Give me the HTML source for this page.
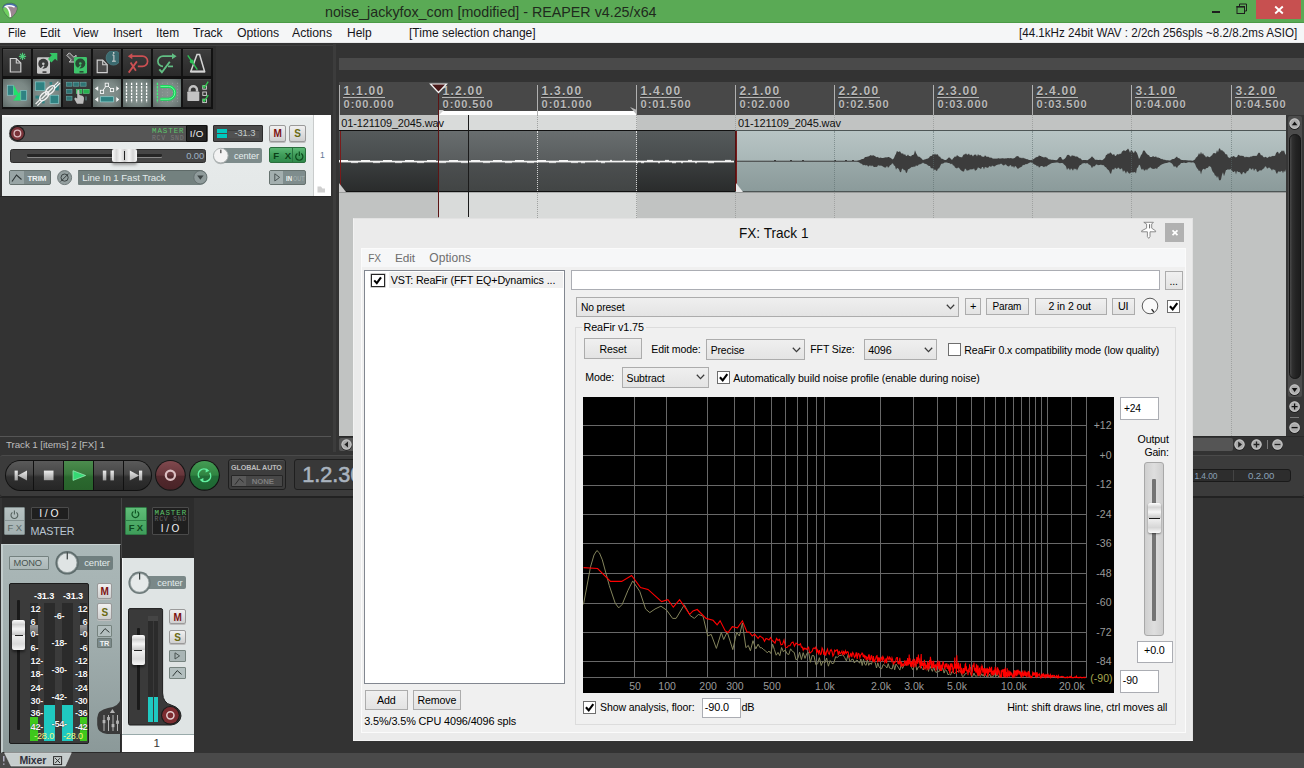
<!DOCTYPE html>
<html><head><meta charset="utf-8"><title>REAPER</title>
<style>
html,body{margin:0;padding:0;}
body{width:1304px;height:768px;overflow:hidden;background:#333333;position:relative;font-family:"Liberation Sans",sans-serif;}
div,span,svg{position:absolute;box-sizing:border-box;}
.t{line-height:0;white-space:nowrap;}
.t i{display:inline-block;height:40px;width:0;}
.t b{font-weight:normal;line-height:0;}
</style></head><body>
<div style="left:0px;top:0px;width:1304px;height:23px;background:#5AAA55;border-bottom:1px solid #4b9a46;"></div>
<div class="t" style="left:324.5px;top:-23.00px;color:#1f2a1d;"><i></i><b style="font-size:15px;display:inline-block;transform:scaleX(0.951279);transform-origin:0 50%;">noise_jackyfox_com [modified] - REAPER v4.25/x64</b></div>
<svg style="left:1px;top:1px;" width="20" height="20" viewBox="0 0 20 20"><defs><clipPath id="ic"><path d="M1.6 6.6Q2.4 3.4 6 2.4Q10.5 1.4 14 3.2Q16.6 4.8 16.4 8Q15.6 12 12 15.4Q10 17.6 8.6 17.2Q6.4 16 4 12.6Q1.4 9 1.6 6.6Z"/></clipPath></defs><g clip-path="url(#ic)"><rect width="20" height="20" fill="#9b8691"/><path d="M0 0H20V7.4L13 5.4L5 5.6L0 9Z" fill="#4c6fae"/><path d="M0 8L4 6L8 10L9.4 18L0 18Z" fill="#70cf60"/><path d="M3.6 5.8Q8 3.6 13.6 6" fill="none" stroke="#fff" stroke-width="1.4"/><path d="M5.4 5.6Q9.4 9 9.3 16" fill="none" stroke="#fff" stroke-width="1.6"/></g><path d="M1.6 6.6Q2.4 3.4 6 2.4Q10.5 1.4 14 3.2Q16.6 4.8 16.4 8Q15.6 12 12 15.4Q10 17.6 8.6 17.2Q6.4 16 4 12.6Q1.4 9 1.6 6.6Z" fill="none" stroke="#3f7a45" stroke-width="0.7"/></svg>
<div style="left:1212px;top:11px;width:8px;height:2px;background:#1e1e1e;"></div>
<svg style="left:1236px;top:3px;" width="12" height="12" viewBox="0 0 12 12"><path d="M3.5 3.5V1H10.5V8H8.5" fill="none" stroke="#1e1e1e" stroke-width="1"/><rect x="1" y="3.5" width="7.5" height="7" fill="none" stroke="#1e1e1e" stroke-width="1"/><rect x="0.5" y="3" width="8.5" height="1.6" fill="#1e1e1e"/></svg>
<div style="left:1256px;top:0px;width:45px;height:19px;background:#C75050;"></div>
<svg style="left:1274px;top:5px;" width="10" height="10" viewBox="0 0 10 10"><path d="M1.2 1.5L8.8 8.5M8.8 1.5L1.2 8.5" stroke="#fff" stroke-width="1.9"/></svg>
<div style="left:0px;top:23px;width:1304px;height:20px;background:#F5F6F7;"></div>
<div style="left:0px;top:42px;width:1304px;height:1px;background:#E8E9EA;"></div>
<div class="t" style="left:7.6px;top:-3.00px;color:#15151a;"><i></i><b style="font-size:12px;display:inline-block;transform:scaleX(0.930954);transform-origin:0 50%;">File</b></div>
<div class="t" style="left:39.6px;top:-3.00px;color:#15151a;"><i></i><b style="font-size:12px;display:inline-block;transform:scaleX(0.976907);transform-origin:0 50%;">Edit</b></div>
<div class="t" style="left:73.2px;top:-3.00px;color:#15151a;"><i></i><b style="font-size:12px;display:inline-block;transform:scaleX(0.984782);transform-origin:0 50%;">View</b></div>
<div class="t" style="left:112.5px;top:-3.00px;color:#15151a;"><i></i><b style="font-size:12px;display:inline-block;transform:scaleX(0.969697);transform-origin:0 50%;">Insert</b></div>
<div class="t" style="left:156px;top:-3.00px;color:#15151a;"><i></i><b style="font-size:12px;display:inline-block;transform:scaleX(0.989876);transform-origin:0 50%;">Item</b></div>
<div class="t" style="left:193.2px;top:-3.00px;color:#15151a;"><i></i><b style="font-size:12px;display:inline-block;transform:scaleX(1.00156);transform-origin:0 50%;">Track</b></div>
<div class="t" style="left:236.5px;top:-3.00px;color:#15151a;"><i></i><b style="font-size:12px;display:inline-block;transform:scaleX(1.02048);transform-origin:0 50%;">Options</b></div>
<div class="t" style="left:292.3px;top:-3.00px;color:#15151a;"><i></i><b style="font-size:12px;display:inline-block;transform:scaleX(1.0165);transform-origin:0 50%;">Actions</b></div>
<div class="t" style="left:346.6px;top:-3.00px;color:#15151a;"><i></i><b style="font-size:12px;display:inline-block;transform:scaleX(1.00086);transform-origin:0 50%;">Help</b></div>
<div class="t" style="left:409.4px;top:-3.00px;color:#15151a;"><i></i><b style="font-size:12px;display:inline-block;transform:scaleX(1.00254);transform-origin:0 50%;">[Time selection change]</b></div>
<div class="t" style="left:1019.1px;top:-3.00px;color:#15151a;"><i></i><b style="font-size:12px;display:inline-block;transform:scaleX(0.966987);transform-origin:0 50%;">[44.1kHz 24bit WAV : 2/2ch 256spls ~8.2/8.2ms ASIO]</b></div>
<div style="left:0px;top:43px;width:1304px;height:725px;background:#333333;"></div>
<div style="left:0px;top:45px;width:333px;height:1px;background:#404040;"></div>
<div style="left:333.2px;top:44px;width:2.6px;height:408px;background:#3c3c3c;"></div>
<div style="left:339px;top:58px;width:965px;height:12px;background:#4a4a4a;"></div>
<div style="left:339px;top:82px;width:965px;height:33px;background:#484848;"></div>
<div style="left:339px;top:115px;width:947px;height:321px;background:#C1C3C2;"></div>
<div style="left:439px;top:115px;width:198px;height:321px;background:#D9DBDA;"></div>
<div style="left:439px;top:110.5px;width:198px;height:4.5px;background:#ffffff;"></div>
<svg style="left:430px;top:104px;" width="20" height="11" viewBox="0 0 20 11"><path d="M9 11V6L14 6Z" fill="#cfcfcf"/></svg>
<svg style="left:624px;top:104px;" width="14" height="11" viewBox="0 0 14 11"><path d="M13 11V6L6 3Z" fill="#b8b8b8"/></svg>
<div style="left:339px;top:85px;width:1px;height:30px;background:#b0b0b0;"></div>
<div class="t" style="left:343.6px;top:55.00px;color:#b9b9b9;"><i></i><b style="font-size:12px;font-weight:bold;letter-spacing:1.248px;text-shadow:0 1px 0 #2a2a2a;">1.1.00</b></div>
<div style="left:343px;top:97px;width:41.5px;height:1px;background:#b4b4b4;"></div>
<div class="t" style="left:343.6px;top:67.80px;color:#b9b9b9;"><i></i><b style="font-size:11px;font-weight:bold;letter-spacing:0.940px;text-shadow:0 1px 0 #2a2a2a;">0:00.000</b></div>
<div style="left:438px;top:85px;width:1px;height:30px;background:#b0b0b0;"></div>
<div class="t" style="left:442.6px;top:55.00px;color:#b9b9b9;"><i></i><b style="font-size:12px;font-weight:bold;letter-spacing:1.248px;text-shadow:0 1px 0 #2a2a2a;">1.2.00</b></div>
<div style="left:442px;top:97px;width:41.5px;height:1px;background:#b4b4b4;"></div>
<div class="t" style="left:442.6px;top:67.80px;color:#b9b9b9;"><i></i><b style="font-size:11px;font-weight:bold;letter-spacing:0.940px;text-shadow:0 1px 0 #2a2a2a;">0:00.500</b></div>
<div style="left:438px;top:115px;width:0px;height:321px;border-left:1px dotted #a0a2a1;"></div>
<div style="left:537px;top:85px;width:1px;height:30px;background:#b0b0b0;"></div>
<div class="t" style="left:541.6px;top:55.00px;color:#b9b9b9;"><i></i><b style="font-size:12px;font-weight:bold;letter-spacing:1.248px;text-shadow:0 1px 0 #2a2a2a;">1.3.00</b></div>
<div style="left:541px;top:97px;width:41.5px;height:1px;background:#b4b4b4;"></div>
<div class="t" style="left:541.6px;top:67.80px;color:#b9b9b9;"><i></i><b style="font-size:11px;font-weight:bold;letter-spacing:0.940px;text-shadow:0 1px 0 #2a2a2a;">0:01.000</b></div>
<div style="left:537px;top:115px;width:0px;height:321px;border-left:1px dotted #a0a2a1;"></div>
<div style="left:636px;top:85px;width:1px;height:30px;background:#b0b0b0;"></div>
<div class="t" style="left:640.6px;top:55.00px;color:#b9b9b9;"><i></i><b style="font-size:12px;font-weight:bold;letter-spacing:1.248px;text-shadow:0 1px 0 #2a2a2a;">1.4.00</b></div>
<div style="left:640px;top:97px;width:41.5px;height:1px;background:#b4b4b4;"></div>
<div class="t" style="left:640.6px;top:67.80px;color:#b9b9b9;"><i></i><b style="font-size:11px;font-weight:bold;letter-spacing:0.940px;text-shadow:0 1px 0 #2a2a2a;">0:01.500</b></div>
<div style="left:636px;top:115px;width:0px;height:321px;border-left:1px dotted #a0a2a1;"></div>
<div style="left:735px;top:85px;width:1px;height:30px;background:#b0b0b0;"></div>
<div class="t" style="left:739.6px;top:55.00px;color:#b9b9b9;"><i></i><b style="font-size:12px;font-weight:bold;letter-spacing:1.248px;text-shadow:0 1px 0 #2a2a2a;">2.1.00</b></div>
<div style="left:739px;top:97px;width:41.5px;height:1px;background:#b4b4b4;"></div>
<div class="t" style="left:739.6px;top:67.80px;color:#b9b9b9;"><i></i><b style="font-size:11px;font-weight:bold;letter-spacing:0.940px;text-shadow:0 1px 0 #2a2a2a;">0:02.000</b></div>
<div style="left:735px;top:115px;width:0px;height:321px;border-left:1px dotted #a0a2a1;"></div>
<div style="left:834px;top:85px;width:1px;height:30px;background:#b0b0b0;"></div>
<div class="t" style="left:838.6px;top:55.00px;color:#b9b9b9;"><i></i><b style="font-size:12px;font-weight:bold;letter-spacing:1.248px;text-shadow:0 1px 0 #2a2a2a;">2.2.00</b></div>
<div style="left:838px;top:97px;width:41.5px;height:1px;background:#b4b4b4;"></div>
<div class="t" style="left:838.6px;top:67.80px;color:#b9b9b9;"><i></i><b style="font-size:11px;font-weight:bold;letter-spacing:0.940px;text-shadow:0 1px 0 #2a2a2a;">0:02.500</b></div>
<div style="left:834px;top:115px;width:0px;height:321px;border-left:1px dotted #a0a2a1;"></div>
<div style="left:933px;top:85px;width:1px;height:30px;background:#b0b0b0;"></div>
<div class="t" style="left:937.6px;top:55.00px;color:#b9b9b9;"><i></i><b style="font-size:12px;font-weight:bold;letter-spacing:1.248px;text-shadow:0 1px 0 #2a2a2a;">2.3.00</b></div>
<div style="left:937px;top:97px;width:41.5px;height:1px;background:#b4b4b4;"></div>
<div class="t" style="left:937.6px;top:67.80px;color:#b9b9b9;"><i></i><b style="font-size:11px;font-weight:bold;letter-spacing:0.940px;text-shadow:0 1px 0 #2a2a2a;">0:03.000</b></div>
<div style="left:933px;top:115px;width:0px;height:321px;border-left:1px dotted #a0a2a1;"></div>
<div style="left:1032px;top:85px;width:1px;height:30px;background:#b0b0b0;"></div>
<div class="t" style="left:1036.6px;top:55.00px;color:#b9b9b9;"><i></i><b style="font-size:12px;font-weight:bold;letter-spacing:1.248px;text-shadow:0 1px 0 #2a2a2a;">2.4.00</b></div>
<div style="left:1036px;top:97px;width:41.5px;height:1px;background:#b4b4b4;"></div>
<div class="t" style="left:1036.6px;top:67.80px;color:#b9b9b9;"><i></i><b style="font-size:11px;font-weight:bold;letter-spacing:0.940px;text-shadow:0 1px 0 #2a2a2a;">0:03.500</b></div>
<div style="left:1032px;top:115px;width:0px;height:321px;border-left:1px dotted #a0a2a1;"></div>
<div style="left:1131px;top:85px;width:1px;height:30px;background:#b0b0b0;"></div>
<div class="t" style="left:1135.6px;top:55.00px;color:#b9b9b9;"><i></i><b style="font-size:12px;font-weight:bold;letter-spacing:1.248px;text-shadow:0 1px 0 #2a2a2a;">3.1.00</b></div>
<div style="left:1135px;top:97px;width:41.5px;height:1px;background:#b4b4b4;"></div>
<div class="t" style="left:1135.6px;top:67.80px;color:#b9b9b9;"><i></i><b style="font-size:11px;font-weight:bold;letter-spacing:0.940px;text-shadow:0 1px 0 #2a2a2a;">0:04.000</b></div>
<div style="left:1131px;top:115px;width:0px;height:321px;border-left:1px dotted #a0a2a1;"></div>
<div style="left:1231px;top:85px;width:1px;height:30px;background:#b0b0b0;"></div>
<div class="t" style="left:1235.6px;top:55.00px;color:#b9b9b9;"><i></i><b style="font-size:12px;font-weight:bold;letter-spacing:1.248px;text-shadow:0 1px 0 #2a2a2a;">3.2.00</b></div>
<div style="left:1235px;top:97px;width:41.5px;height:1px;background:#b4b4b4;"></div>
<div class="t" style="left:1235.6px;top:67.80px;color:#b9b9b9;"><i></i><b style="font-size:11px;font-weight:bold;letter-spacing:0.940px;text-shadow:0 1px 0 #2a2a2a;">0:04.500</b></div>
<div style="left:1231px;top:115px;width:0px;height:321px;border-left:1px dotted #a0a2a1;"></div>
<div class="t" style="left:341.2px;top:86.60px;color:#101010;"><i></i><b style="font-size:11.01px;letter-spacing:-0.122px;">01-121109_2045.wav</b></div>
<div class="t" style="left:738px;top:86.60px;color:#101010;"><i></i><b style="font-size:11.01px;letter-spacing:-0.122px;">01-121109_2045.wav</b></div>
<div style="left:339px;top:130px;width:396px;height:62px;background:linear-gradient(#555a5b 0%,#484c4d 47%,#3a3d3e 53%,#2a2c2c 100%);border-top:1px solid #111;border-bottom:1px solid #111;"></div>
<div style="left:439px;top:131px;width:198px;height:60px;background:linear-gradient(#696e6f 0%,#5a5e5f 47%,#4c4f50 53%,#424545 100%);"></div>
<svg style="left:339px;top:131px;" width="396" height="60" viewBox="0 0 396 60"><rect x="0" y="29.7" width="395" height="1.7" fill="#f4f4f4"/><rect x="0" y="29" width="9" height="1" fill="#f4f4f4"/><rect x="12" y="31.2" width="7" height="0.9" fill="#e8e8e8"/><rect x="22" y="29" width="9" height="1" fill="#f4f4f4"/><rect x="34" y="31.2" width="7" height="0.9" fill="#e8e8e8"/><rect x="44" y="29" width="9" height="1" fill="#f4f4f4"/><rect x="56" y="31.2" width="7" height="0.9" fill="#e8e8e8"/><rect x="66" y="29" width="9" height="1" fill="#f4f4f4"/><rect x="78" y="31.2" width="7" height="0.9" fill="#e8e8e8"/><rect x="88" y="29" width="9" height="1" fill="#f4f4f4"/><rect x="100" y="31.2" width="7" height="0.9" fill="#e8e8e8"/><rect x="110" y="29" width="9" height="1" fill="#f4f4f4"/><rect x="122" y="31.2" width="7" height="0.9" fill="#e8e8e8"/><rect x="132" y="29" width="9" height="1" fill="#f4f4f4"/><rect x="144" y="31.2" width="7" height="0.9" fill="#e8e8e8"/><rect x="154" y="29" width="9" height="1" fill="#f4f4f4"/><rect x="166" y="31.2" width="7" height="0.9" fill="#e8e8e8"/><rect x="176" y="29" width="9" height="1" fill="#f4f4f4"/><rect x="188" y="31.2" width="7" height="0.9" fill="#e8e8e8"/><rect x="198" y="29" width="9" height="1" fill="#f4f4f4"/><rect x="210" y="31.2" width="7" height="0.9" fill="#e8e8e8"/><rect x="220" y="29" width="9" height="1" fill="#f4f4f4"/><rect x="232" y="31.2" width="7" height="0.9" fill="#e8e8e8"/><rect x="242" y="31.2" width="4" height="1" fill="#f0f0f0"/><rect x="257" y="28.9" width="2" height="1" fill="#f4f4f4"/><rect x="262" y="31.2" width="4" height="1" fill="#f0f0f0"/><rect x="271" y="28.9" width="2" height="1" fill="#f4f4f4"/><rect x="284" y="28.9" width="2" height="1" fill="#f4f4f4"/><rect x="297" y="31.2" width="2" height="1" fill="#f0f0f0"/><rect x="302" y="31.2" width="3" height="1" fill="#f0f0f0"/><rect x="308" y="28.9" width="6" height="1" fill="#f4f4f4"/><rect x="319" y="31.2" width="2" height="1" fill="#f0f0f0"/><rect x="326" y="28.9" width="4" height="1" fill="#f4f4f4"/><rect x="333" y="31.2" width="4" height="1" fill="#f0f0f0"/><rect x="342" y="31.2" width="2" height="1" fill="#f0f0f0"/><rect x="349" y="28.9" width="4" height="1" fill="#f4f4f4"/><rect x="356" y="31.2" width="2" height="1" fill="#f0f0f0"/><rect x="369" y="31.2" width="6" height="1" fill="#f0f0f0"/><rect x="386" y="28.9" width="6" height="1" fill="#f4f4f4"/></svg>
<div style="left:339.5px;top:131px;width:1px;height:60px;background:#7a1a1a;"></div>
<svg style="left:339px;top:183px;" width="10" height="9" viewBox="0 0 10 9"><path d="M0 0L7 9H0Z" fill="#c9c9c9"/></svg>
<div style="left:735px;top:130px;width:551px;height:62px;background:linear-gradient(#b7c4c4 0%,#a9b7b7 48%,#99a8a8 52%,#8b9b9b 100%);border-top:1px solid #4d5555;border-bottom:1px solid #4d5555;"></div>
<div style="left:734.8px;top:131px;width:2px;height:60px;background:linear-gradient(90deg,#3a1010,#8e1c1c);"></div>
<svg style="left:736px;top:183px;" width="10" height="9" viewBox="0 0 10 9"><path d="M0 0L7 9H0Z" fill="#e8e8e8"/></svg>
<svg style="left:737px;top:131px;" width="549" height="60" viewBox="0 0 549 60"><path d="M0.0 29.8 L1.0 29.8 L2.0 29.8 L3.0 29.8 L4.0 29.8 L5.0 29.8 L6.0 29.8 L7.0 29.8 L8.0 29.8 L9.0 29.8 L10.0 29.8 L11.0 29.8 L12.0 29.8 L13.0 29.8 L14.0 29.8 L15.0 29.8 L16.0 29.8 L17.0 29.8 L18.0 29.8 L19.0 29.8 L20.0 29.8 L21.0 29.8 L22.0 29.8 L23.0 29.8 L24.0 29.8 L25.0 29.8 L26.0 29.8 L27.0 29.8 L28.0 29.8 L29.0 29.8 L30.0 29.8 L31.0 29.8 L32.0 29.8 L33.0 29.8 L34.0 29.8 L35.0 29.8 L36.0 29.8 L37.0 29.8 L38.0 29.8 L39.0 29.8 L40.0 29.8 L41.0 29.8 L42.0 29.8 L43.0 29.8 L44.0 29.8 L45.0 29.8 L46.0 29.8 L47.0 29.8 L48.0 29.8 L49.0 29.8 L50.0 29.8 L51.0 29.8 L52.0 29.8 L53.0 29.8 L54.0 29.8 L55.0 29.8 L56.0 29.8 L57.0 29.8 L58.0 29.8 L59.0 29.8 L60.0 29.8 L61.0 29.8 L62.0 29.8 L63.0 29.8 L64.0 29.8 L65.0 29.8 L66.0 29.8 L67.0 29.8 L68.0 29.8 L69.0 29.8 L70.0 29.8 L71.0 29.8 L72.0 29.8 L73.0 29.8 L74.0 29.8 L75.0 29.8 L76.0 29.8 L77.0 29.8 L78.0 29.8 L79.0 29.8 L80.0 29.8 L81.0 29.8 L82.0 29.8 L83.0 29.8 L84.0 29.8 L85.0 29.8 L86.0 29.8 L87.0 29.8 L88.0 29.8 L89.0 29.8 L90.0 29.8 L91.0 29.8 L92.0 29.8 L93.0 29.8 L94.0 29.8 L95.0 29.8 L96.0 29.8 L97.0 29.8 L98.0 29.8 L99.0 29.8 L100.0 29.8 L101.0 29.8 L102.0 29.8 L103.0 29.8 L104.0 29.8 L105.0 29.8 L106.0 29.8 L107.0 29.8 L108.0 29.8 L109.0 29.8 L110.0 29.8 L111.0 29.8 L112.0 29.8 L113.0 29.8 L114.0 29.8 L115.0 29.8 L116.0 29.8 L117.0 29.8 L118.0 29.8 L119.0 29.8 L120.0 29.8 L121.0 29.6 L122.0 29.3 L123.0 29.1 L124.0 28.6 L125.0 27.9 L126.0 28.1 L127.0 27.5 L128.0 26.1 L129.0 25.9 L130.0 25.8 L131.0 25.5 L132.0 25.3 L133.0 24.6 L134.0 24.0 L135.0 25.0 L136.0 24.0 L137.0 24.7 L138.0 25.0 L139.0 26.0 L140.0 26.2 L141.0 25.8 L142.0 27.3 L143.0 26.4 L144.0 26.8 L145.0 27.0 L146.0 27.1 L147.0 26.8 L148.0 26.5 L149.0 26.2 L150.0 26.5 L151.0 26.1 L152.0 26.0 L153.0 26.8 L154.0 27.1 L155.0 28.2 L156.0 28.2 L157.0 27.0 L158.0 24.4 L159.0 22.7 L160.0 19.7 L161.0 20.9 L162.0 20.7 L163.0 20.3 L164.0 21.9 L165.0 22.8 L166.0 22.2 L167.0 23.9 L168.0 23.1 L169.0 25.1 L170.0 24.7 L171.0 23.5 L172.0 25.0 L173.0 24.9 L174.0 25.4 L175.0 23.9 L176.0 23.9 L177.0 23.3 L178.0 19.2 L179.0 22.1 L180.0 23.7 L181.0 25.7 L182.0 25.4 L183.0 26.3 L184.0 27.1 L185.0 27.9 L186.0 29.2 L187.0 28.5 L188.0 28.5 L189.0 27.9 L190.0 27.8 L191.0 27.4 L192.0 26.8 L193.0 25.2 L194.0 24.9 L195.0 24.8 L196.0 22.8 L197.0 23.9 L198.0 22.6 L199.0 24.1 L200.0 22.9 L201.0 23.8 L202.0 25.8 L203.0 25.6 L204.0 27.5 L205.0 27.7 L206.0 27.9 L207.0 28.8 L208.0 28.9 L209.0 29.0 L210.0 28.2 L211.0 27.2 L212.0 26.2 L213.0 26.9 L214.0 27.9 L215.0 29.1 L216.0 27.6 L217.0 26.4 L218.0 25.3 L219.0 25.9 L220.0 24.1 L221.0 25.0 L222.0 25.6 L223.0 26.3 L224.0 26.0 L225.0 26.6 L226.0 24.6 L227.0 23.3 L228.0 23.4 L229.0 22.2 L230.0 23.8 L231.0 23.4 L232.0 22.5 L233.0 24.5 L234.0 23.4 L235.0 23.9 L236.0 25.5 L237.0 23.8 L238.0 23.7 L239.0 23.5 L240.0 25.5 L241.0 23.0 L242.0 24.5 L243.0 24.0 L244.0 24.4 L245.0 25.8 L246.0 25.6 L247.0 25.9 L248.0 24.3 L249.0 25.3 L250.0 25.9 L251.0 25.5 L252.0 26.3 L253.0 26.7 L254.0 26.6 L255.0 27.1 L256.0 27.7 L257.0 27.4 L258.0 27.7 L259.0 27.4 L260.0 27.7 L261.0 27.3 L262.0 27.3 L263.0 27.8 L264.0 27.3 L265.0 27.6 L266.0 27.1 L267.0 27.7 L268.0 27.2 L269.0 27.6 L270.0 27.2 L271.0 27.1 L272.0 27.3 L273.0 27.2 L274.0 27.0 L275.0 27.4 L276.0 27.4 L277.0 27.2 L278.0 26.8 L279.0 25.4 L280.0 25.2 L281.0 25.1 L282.0 25.9 L283.0 27.1 L284.0 26.6 L285.0 27.4 L286.0 26.5 L287.0 27.6 L288.0 27.3 L289.0 28.3 L290.0 28.1 L291.0 28.6 L292.0 28.9 L293.0 29.1 L294.0 29.3 L295.0 28.8 L296.0 28.3 L297.0 28.0 L298.0 26.7 L299.0 26.5 L300.0 25.7 L301.0 26.1 L302.0 24.2 L303.0 25.0 L304.0 24.9 L305.0 26.1 L306.0 25.7 L307.0 26.7 L308.0 25.7 L309.0 26.4 L310.0 26.6 L311.0 27.8 L312.0 28.4 L313.0 28.3 L314.0 28.7 L315.0 28.8 L316.0 28.7 L317.0 29.1 L318.0 29.1 L319.0 29.2 L320.0 28.9 L321.0 27.9 L322.0 26.5 L323.0 25.9 L324.0 26.1 L325.0 28.2 L326.0 28.8 L327.0 28.2 L328.0 27.5 L329.0 26.2 L330.0 24.3 L331.0 23.8 L332.0 23.9 L333.0 25.0 L334.0 25.8 L335.0 24.0 L336.0 25.1 L337.0 24.5 L338.0 25.5 L339.0 25.4 L340.0 25.4 L341.0 26.1 L342.0 27.2 L343.0 27.2 L344.0 27.8 L345.0 29.2 L346.0 29.1 L347.0 28.9 L348.0 29.1 L349.0 29.1 L350.0 29.2 L351.0 29.1 L352.0 27.9 L353.0 27.4 L354.0 26.6 L355.0 25.3 L356.0 26.5 L357.0 27.3 L358.0 28.7 L359.0 28.8 L360.0 28.7 L361.0 29.0 L362.0 28.9 L363.0 28.8 L364.0 29.0 L365.0 29.2 L366.0 28.8 L367.0 27.8 L368.0 26.9 L369.0 24.1 L370.0 23.7 L371.0 22.2 L372.0 23.0 L373.0 21.6 L374.0 21.7 L375.0 23.3 L376.0 24.0 L377.0 22.7 L378.0 25.1 L379.0 24.8 L380.0 23.2 L381.0 23.3 L382.0 23.4 L383.0 22.4 L384.0 23.1 L385.0 20.6 L386.0 20.0 L387.0 19.0 L388.0 20.2 L389.0 19.4 L390.0 18.8 L391.0 17.5 L392.0 18.9 L393.0 21.8 L394.0 18.9 L395.0 19.6 L396.0 21.3 L397.0 22.1 L398.0 19.5 L399.0 20.8 L400.0 22.0 L401.0 24.7 L402.0 28.1 L403.0 26.4 L404.0 24.1 L405.0 23.1 L406.0 20.0 L407.0 19.3 L408.0 20.2 L409.0 22.1 L410.0 23.0 L411.0 23.9 L412.0 24.3 L413.0 25.9 L414.0 26.1 L415.0 26.0 L416.0 25.0 L417.0 25.7 L418.0 26.0 L419.0 25.3 L420.0 26.7 L421.0 26.2 L422.0 27.1 L423.0 27.1 L424.0 28.2 L425.0 27.7 L426.0 28.4 L427.0 28.8 L428.0 28.8 L429.0 29.2 L430.0 29.3 L431.0 29.2 L432.0 29.4 L433.0 29.6 L434.0 29.1 L435.0 28.3 L436.0 28.0 L437.0 27.9 L438.0 27.2 L439.0 26.2 L440.0 25.6 L441.0 27.2 L442.0 27.1 L443.0 27.9 L444.0 28.7 L445.0 29.1 L446.0 28.9 L447.0 29.2 L448.0 29.1 L449.0 29.2 L450.0 29.3 L451.0 29.4 L452.0 29.4 L453.0 29.5 L454.0 29.6 L455.0 29.7 L456.0 29.8 L457.0 29.1 L458.0 28.4 L459.0 26.5 L460.0 26.1 L461.0 24.4 L462.0 22.0 L463.0 23.8 L464.0 20.7 L465.0 23.6 L466.0 22.0 L467.0 24.3 L468.0 24.6 L469.0 26.4 L470.0 25.2 L471.0 25.6 L472.0 26.0 L473.0 26.2 L474.0 24.7 L475.0 24.6 L476.0 22.4 L477.0 22.1 L478.0 22.3 L479.0 22.5 L480.0 18.9 L481.0 21.5 L482.0 17.6 L483.0 17.6 L484.0 19.8 L485.0 18.7 L486.0 20.5 L487.0 20.5 L488.0 22.4 L489.0 23.6 L490.0 23.3 L491.0 26.2 L492.0 26.4 L493.0 27.3 L494.0 25.4 L495.0 26.0 L496.0 25.3 L497.0 25.1 L498.0 26.2 L499.0 26.2 L500.0 26.0 L501.0 23.9 L502.0 23.8 L503.0 25.0 L504.0 24.4 L505.0 25.0 L506.0 24.7 L507.0 25.4 L508.0 26.5 L509.0 25.5 L510.0 26.3 L511.0 25.8 L512.0 26.5 L513.0 25.7 L514.0 25.6 L515.0 25.5 L516.0 24.8 L517.0 25.0 L518.0 24.7 L519.0 25.1 L520.0 24.6 L521.0 22.6 L522.0 21.4 L523.0 22.3 L524.0 24.5 L525.0 24.0 L526.0 25.6 L527.0 26.4 L528.0 25.9 L529.0 25.7 L530.0 27.0 L531.0 26.5 L532.0 25.8 L533.0 25.4 L534.0 25.9 L535.0 24.8 L536.0 25.3 L537.0 24.7 L538.0 24.9 L539.0 22.3 L540.0 21.0 L541.0 20.7 L542.0 23.0 L543.0 21.5 L544.0 20.8 L545.0 19.2 L546.0 20.5 L547.0 19.3 L548.0 22.4 L549.0 23.9 L549.0 38.2 L548.0 41.3 L547.0 39.4 L546.0 42.2 L545.0 39.7 L544.0 40.2 L543.0 41.1 L542.0 40.3 L541.0 40.7 L540.0 43.1 L539.0 41.4 L538.0 38.6 L537.0 39.3 L536.0 37.7 L535.0 39.8 L534.0 37.9 L533.0 37.3 L532.0 36.2 L531.0 37.3 L530.0 37.4 L529.0 35.6 L528.0 35.5 L527.0 37.5 L526.0 37.7 L525.0 38.9 L524.0 39.7 L523.0 39.0 L522.0 39.9 L521.0 40.7 L520.0 40.7 L519.0 37.8 L518.0 38.3 L517.0 40.1 L516.0 37.1 L515.0 38.4 L514.0 38.4 L513.0 36.8 L512.0 38.2 L511.0 40.3 L510.0 40.1 L509.0 41.9 L508.0 42.7 L507.0 41.3 L506.0 41.1 L505.0 43.5 L504.0 43.1 L503.0 41.3 L502.0 40.9 L501.0 41.1 L500.0 39.8 L499.0 43.4 L498.0 39.8 L497.0 41.0 L496.0 40.9 L495.0 39.6 L494.0 38.4 L493.0 38.0 L492.0 38.9 L491.0 38.0 L490.0 39.1 L489.0 39.1 L488.0 42.3 L487.0 45.3 L486.0 41.3 L485.0 43.8 L484.0 48.5 L483.0 49.5 L482.0 48.9 L481.0 44.9 L480.0 46.9 L479.0 44.4 L478.0 44.8 L477.0 42.0 L476.0 41.2 L475.0 39.3 L474.0 36.1 L473.0 35.5 L472.0 35.1 L471.0 36.8 L470.0 37.0 L469.0 37.3 L468.0 38.8 L467.0 37.8 L466.0 37.9 L465.0 39.5 L464.0 43.5 L463.0 39.2 L462.0 40.3 L461.0 38.3 L460.0 37.3 L459.0 35.5 L458.0 32.7 L457.0 31.7 L456.0 31.3 L455.0 31.4 L454.0 31.5 L453.0 31.3 L452.0 31.3 L451.0 31.3 L450.0 31.8 L449.0 32.1 L448.0 32.0 L447.0 31.6 L446.0 32.1 L445.0 31.9 L444.0 32.0 L443.0 33.4 L442.0 34.3 L441.0 35.0 L440.0 36.9 L439.0 35.9 L438.0 35.0 L437.0 36.0 L436.0 33.9 L435.0 32.6 L434.0 32.1 L433.0 31.3 L432.0 31.2 L431.0 31.5 L430.0 32.0 L429.0 32.0 L428.0 32.3 L427.0 32.5 L426.0 32.9 L425.0 33.3 L424.0 34.0 L423.0 34.5 L422.0 35.8 L421.0 35.9 L420.0 38.0 L419.0 37.2 L418.0 37.5 L417.0 38.1 L416.0 37.8 L415.0 37.7 L414.0 36.7 L413.0 36.2 L412.0 37.6 L411.0 37.5 L410.0 39.5 L409.0 37.9 L408.0 39.6 L407.0 39.6 L406.0 37.6 L405.0 38.9 L404.0 37.6 L403.0 34.3 L402.0 33.8 L401.0 36.5 L400.0 37.0 L399.0 42.5 L398.0 41.1 L397.0 41.3 L396.0 41.5 L395.0 41.2 L394.0 41.3 L393.0 42.6 L392.0 42.4 L391.0 41.3 L390.0 40.0 L389.0 42.7 L388.0 40.5 L387.0 39.3 L386.0 40.9 L385.0 37.2 L384.0 37.7 L383.0 38.5 L382.0 36.9 L381.0 36.4 L380.0 38.0 L379.0 37.6 L378.0 36.4 L377.0 39.1 L376.0 37.8 L375.0 39.3 L374.0 43.0 L373.0 41.9 L372.0 39.6 L371.0 38.8 L370.0 37.8 L369.0 36.2 L368.0 35.9 L367.0 34.5 L366.0 34.0 L365.0 34.3 L364.0 33.5 L363.0 33.9 L362.0 34.1 L361.0 34.3 L360.0 33.4 L359.0 33.4 L358.0 35.1 L357.0 35.5 L356.0 35.2 L355.0 37.2 L354.0 35.3 L353.0 33.8 L352.0 33.7 L351.0 32.6 L350.0 32.0 L349.0 32.4 L348.0 32.3 L347.0 32.0 L346.0 32.4 L345.0 32.5 L344.0 34.0 L343.0 34.0 L342.0 35.5 L341.0 37.5 L340.0 39.5 L339.0 37.4 L338.0 38.6 L337.0 37.3 L336.0 39.7 L335.0 38.3 L334.0 37.3 L333.0 39.4 L332.0 37.6 L331.0 37.2 L330.0 38.9 L329.0 35.6 L328.0 34.2 L327.0 33.6 L326.0 32.3 L325.0 31.9 L324.0 32.1 L323.0 32.3 L322.0 32.1 L321.0 31.6 L320.0 31.4 L319.0 31.4 L318.0 31.7 L317.0 31.7 L316.0 31.9 L315.0 31.9 L314.0 32.5 L313.0 32.9 L312.0 33.8 L311.0 33.9 L310.0 35.2 L309.0 35.4 L308.0 35.3 L307.0 36.3 L306.0 35.4 L305.0 35.1 L304.0 35.1 L303.0 35.7 L302.0 36.8 L301.0 34.4 L300.0 35.4 L299.0 34.1 L298.0 33.8 L297.0 33.2 L296.0 32.6 L295.0 32.1 L294.0 31.3 L293.0 31.4 L292.0 32.0 L291.0 32.4 L290.0 33.2 L289.0 33.0 L288.0 33.4 L287.0 34.3 L286.0 33.8 L285.0 35.5 L284.0 35.9 L283.0 36.5 L282.0 37.0 L281.0 37.9 L280.0 37.0 L279.0 35.4 L278.0 34.9 L277.0 36.9 L276.0 34.8 L275.0 36.2 L274.0 34.2 L273.0 34.3 L272.0 35.4 L271.0 35.2 L270.0 34.8 L269.0 33.6 L268.0 33.6 L267.0 34.4 L266.0 34.2 L265.0 33.3 L264.0 32.6 L263.0 33.2 L262.0 33.4 L261.0 33.6 L260.0 34.0 L259.0 34.2 L258.0 35.2 L257.0 35.5 L256.0 34.9 L255.0 34.5 L254.0 36.3 L253.0 35.1 L252.0 35.5 L251.0 36.9 L250.0 36.4 L249.0 36.4 L248.0 35.8 L247.0 38.5 L246.0 36.1 L245.0 36.0 L244.0 38.3 L243.0 37.3 L242.0 36.9 L241.0 36.3 L240.0 38.4 L239.0 39.2 L238.0 39.7 L237.0 37.2 L236.0 38.6 L235.0 38.1 L234.0 38.7 L233.0 38.0 L232.0 39.5 L231.0 38.9 L230.0 40.0 L229.0 38.2 L228.0 37.4 L227.0 40.6 L226.0 40.4 L225.0 40.0 L224.0 39.3 L223.0 38.2 L222.0 36.7 L221.0 36.6 L220.0 37.4 L219.0 37.0 L218.0 36.5 L217.0 34.6 L216.0 34.5 L215.0 32.5 L214.0 33.2 L213.0 32.4 L212.0 32.0 L211.0 32.1 L210.0 31.4 L209.0 31.4 L208.0 31.6 L207.0 31.8 L206.0 32.7 L205.0 32.5 L204.0 33.3 L203.0 35.4 L202.0 37.6 L201.0 37.6 L200.0 40.1 L199.0 39.4 L198.0 38.2 L197.0 39.2 L196.0 37.7 L195.0 36.9 L194.0 37.6 L193.0 34.9 L192.0 35.0 L191.0 34.6 L190.0 33.4 L189.0 33.0 L188.0 32.7 L187.0 32.6 L186.0 31.4 L185.0 32.5 L184.0 32.7 L183.0 33.4 L182.0 33.3 L181.0 34.6 L180.0 35.1 L179.0 34.3 L178.0 35.9 L177.0 35.3 L176.0 36.3 L175.0 35.8 L174.0 36.5 L173.0 37.3 L172.0 37.9 L171.0 38.3 L170.0 41.4 L169.0 42.0 L168.0 38.7 L167.0 39.6 L166.0 37.8 L165.0 37.8 L164.0 41.3 L163.0 41.1 L162.0 38.4 L161.0 37.2 L160.0 37.0 L159.0 38.7 L158.0 35.1 L157.0 34.5 L156.0 32.5 L155.0 32.5 L154.0 34.1 L153.0 34.3 L152.0 36.0 L151.0 36.8 L150.0 34.8 L149.0 36.6 L148.0 36.4 L147.0 36.2 L146.0 35.4 L145.0 34.9 L144.0 34.6 L143.0 34.8 L142.0 34.4 L141.0 34.2 L140.0 35.9 L139.0 35.7 L138.0 36.0 L137.0 36.0 L136.0 35.2 L135.0 34.2 L134.0 35.4 L133.0 34.1 L132.0 35.3 L131.0 35.4 L130.0 33.9 L129.0 34.4 L128.0 34.2 L127.0 33.7 L126.0 34.5 L125.0 32.7 L124.0 32.7 L123.0 31.9 L122.0 31.3 L121.0 31.1 L120.0 30.8 L119.0 30.8 L118.0 30.8 L117.0 30.8 L116.0 30.8 L115.0 30.8 L114.0 30.8 L113.0 30.8 L112.0 30.8 L111.0 30.8 L110.0 30.8 L109.0 30.8 L108.0 30.8 L107.0 30.8 L106.0 30.8 L105.0 30.8 L104.0 30.8 L103.0 30.8 L102.0 30.8 L101.0 30.8 L100.0 30.8 L99.0 30.8 L98.0 30.8 L97.0 30.8 L96.0 30.8 L95.0 30.8 L94.0 30.8 L93.0 30.8 L92.0 30.8 L91.0 30.8 L90.0 30.8 L89.0 30.8 L88.0 30.8 L87.0 30.8 L86.0 30.8 L85.0 30.8 L84.0 30.8 L83.0 30.8 L82.0 30.8 L81.0 30.8 L80.0 30.8 L79.0 30.8 L78.0 30.8 L77.0 30.8 L76.0 30.8 L75.0 30.8 L74.0 30.8 L73.0 30.8 L72.0 30.8 L71.0 30.8 L70.0 30.8 L69.0 30.8 L68.0 30.8 L67.0 30.8 L66.0 30.8 L65.0 30.8 L64.0 30.8 L63.0 30.8 L62.0 30.8 L61.0 30.8 L60.0 30.8 L59.0 30.8 L58.0 30.8 L57.0 30.8 L56.0 30.8 L55.0 30.8 L54.0 30.8 L53.0 30.8 L52.0 30.8 L51.0 30.8 L50.0 30.8 L49.0 30.8 L48.0 30.8 L47.0 30.8 L46.0 30.8 L45.0 30.8 L44.0 30.8 L43.0 30.8 L42.0 30.8 L41.0 30.8 L40.0 30.8 L39.0 30.8 L38.0 30.8 L37.0 30.8 L36.0 30.8 L35.0 30.8 L34.0 30.8 L33.0 30.8 L32.0 30.8 L31.0 30.8 L30.0 30.8 L29.0 30.8 L28.0 30.8 L27.0 30.8 L26.0 30.8 L25.0 30.8 L24.0 30.8 L23.0 30.8 L22.0 30.8 L21.0 30.8 L20.0 30.8 L19.0 30.8 L18.0 30.8 L17.0 30.8 L16.0 30.8 L15.0 30.8 L14.0 30.8 L13.0 30.8 L12.0 30.8 L11.0 30.8 L10.0 30.8 L9.0 30.8 L8.0 30.8 L7.0 30.8 L6.0 30.8 L5.0 30.8 L4.0 30.8 L3.0 30.8 L2.0 30.8 L1.0 30.8 L0.0 30.8Z" fill="#3c3c3c"/></svg>
<div style="left:773.5px;top:160px;width:2px;height:1px;background:#3c3c3c;"></div>
<div style="left:790px;top:160px;width:2px;height:1px;background:#3c3c3c;"></div>
<div style="left:802px;top:160px;width:2px;height:1px;background:#3c3c3c;"></div>
<div style="left:834px;top:160px;width:2px;height:1px;background:#3c3c3c;"></div>
<div style="left:845px;top:160px;width:2px;height:1px;background:#3c3c3c;"></div>
<div style="left:852px;top:160px;width:2px;height:1px;background:#3c3c3c;"></div>
<div style="left:438px;top:131px;width:0px;height:60px;border-left:1px dotted rgba(255,255,255,0.75);"></div>
<div style="left:537px;top:131px;width:0px;height:60px;border-left:1px dotted rgba(255,255,255,0.75);"></div>
<div style="left:636px;top:131px;width:0px;height:60px;border-left:1px dotted rgba(255,255,255,0.75);"></div>
<div style="left:834px;top:131px;width:0px;height:60px;border-left:1px dotted rgba(90,105,105,0.55);"></div>
<div style="left:933px;top:131px;width:0px;height:60px;border-left:1px dotted rgba(90,105,105,0.55);"></div>
<div style="left:1032px;top:131px;width:0px;height:60px;border-left:1px dotted rgba(90,105,105,0.55);"></div>
<div style="left:1131px;top:131px;width:0px;height:60px;border-left:1px dotted rgba(90,105,105,0.55);"></div>
<div style="left:1231px;top:131px;width:0px;height:60px;border-left:1px dotted rgba(90,105,105,0.55);"></div>
<div style="left:339px;top:192px;width:947px;height:1px;background:rgba(0,0,0,0.2);"></div>
<div style="left:438px;top:93px;width:1px;height:124px;background:#5c1414;"></div>
<svg style="left:429px;top:83px;" width="20" height="11" viewBox="0 0 20 11"><path d="M1.5 1H17.5L9.5 9.5Z" fill="#4a1a1a" stroke="#f4f4f4" stroke-width="1.2"/></svg>
<div style="left:467.5px;top:115px;width:1.5px;height:102px;background:#1b1b1b;"></div>
<div style="left:0px;top:46px;width:216px;height:64px;background:#2e2e2e;"></div>
<div style="left:2px;top:48px;width:211px;height:61px;background:#121212;"></div>
<div style="left:3px;top:49px;width:28px;height:27.4px;background:linear-gradient(#3d3d3d 0%,#333 50%,#2a2a2a 100%);border-top:1px solid #4a4a4a;"></div>
<svg style="left:3px;top:49px;" width="28" height="28" viewBox="0 0 28 28"><path d="M7.3 9.5H13.3L17.8 14V23H7.3Z" fill="#4b4b4b" stroke="#cfcfcf" stroke-width="1.2"/><path d="M13.3 9.5V14H17.8" fill="none" stroke="#cfcfcf" stroke-width="1.1"/><line x1="23.1" y1="7.4" x2="15.9" y2="7.4" stroke="#4fcf7c" stroke-width="1.1"/><line x1="22.0456" y1="9.94558" x2="16.9544" y2="4.85442" stroke="#4fcf7c" stroke-width="1.1"/><line x1="19.5" y1="11" x2="19.5" y2="3.8" stroke="#4fcf7c" stroke-width="1.1"/><line x1="16.9544" y1="9.94558" x2="22.0456" y2="4.85442" stroke="#4fcf7c" stroke-width="1.1"/></svg>
<div style="left:33px;top:49px;width:28px;height:27.4px;background:linear-gradient(#3d3d3d 0%,#333 50%,#2a2a2a 100%);border-top:1px solid #4a4a4a;"></div>
<svg style="left:33px;top:49px;" width="28" height="28" viewBox="0 0 28 28"><rect x="4" y="8.3" width="13" height="16.5" rx="1.3" fill="#c9c9c9"/><circle cx="10.3" cy="14.8" r="5" fill="#3a3a3a"/><circle cx="10.3" cy="14.8" r="1.3" fill="#c9c9c9"/><path d="M6.5 21.8L11 16.8" stroke="#c9c9c9" stroke-width="1.4"/><rect x="9.5" y="22.3" width="4" height="1.6" fill="#3a3a3a"/><path d="M24.3 4H16.4L18.7 6.3L15 10L18.4 13.4L22.1 9.7L24.3 11.9Z" fill="#35c565"/></svg>
<div style="left:63px;top:49px;width:28px;height:27.4px;background:linear-gradient(#3d3d3d 0%,#333 50%,#2a2a2a 100%);border-top:1px solid #4a4a4a;"></div>
<svg style="left:63px;top:49px;" width="28" height="28" viewBox="0 0 28 28"><path d="M13 13V6.2L10.9 8.3L6.4 3.8L3.8 6.4L8.3 10.9L6.2 13Z" fill="#585858" stroke="#cfcfcf" stroke-width="1"/><rect x="11" y="8" width="13" height="16.5" rx="1.3" fill="#3fc56c"/><circle cx="17.3" cy="14.5" r="5" fill="#2a4a35"/><circle cx="17.3" cy="14.5" r="1.3" fill="#3fc56c"/><path d="M13.5 21.5L18 16.5" stroke="#3fc56c" stroke-width="1.4"/><rect x="16.5" y="22" width="4" height="1.6" fill="#2a4a35"/></svg>
<div style="left:93px;top:49px;width:28px;height:27.4px;background:linear-gradient(#3d3d3d 0%,#333 50%,#2a2a2a 100%);border-top:1px solid #4a4a4a;"></div>
<svg style="left:93px;top:49px;" width="28" height="28" viewBox="0 0 28 28"><path d="M4.2 11.2H9.7L14.2 15.7V23.7H4.2Z" fill="#4b4b4b" stroke="#cfcfcf" stroke-width="1.2"/><path d="M9.7 11.2V15.7H14.2" fill="none" stroke="#cfcfcf" stroke-width="1.1"/><defs><clipPath id="icl"><rect x="0" y="2" width="26" height="26"/></clipPath></defs><circle cx="20.4" cy="8.8" r="7.3" fill="#3b6a6f" stroke="#4f8388" stroke-width="0.7" clip-path="url(#icl)"/><path d="M19.4 6H20.9V12M19 12.2H22.8" stroke="#dadada" stroke-width="1" fill="none"/><circle cx="20.7" cy="3.9" r="0.85" fill="#dadada"/></svg>
<div style="left:123px;top:49px;width:28px;height:27.4px;background:linear-gradient(#3d3d3d 0%,#333 50%,#2a2a2a 100%);border-top:1px solid #4a4a4a;"></div>
<svg style="left:123px;top:49px;" width="28" height="28" viewBox="0 0 28 28"><path d="M7 7.2H19.5A5.1 5.1 0 0 1 19.5 17.4H14.8" fill="none" stroke="#cc5053" stroke-width="1.7"/><path d="M4.8 7.2L9.3 4.2V10.2Z" fill="#cc5053"/><path d="M7.6 13.6L12.9 21.7M13.9 12.4L5.7 23.6" stroke="#cc5053" stroke-width="1.8" fill="none"/></svg>
<div style="left:153px;top:49px;width:28px;height:27.4px;background:linear-gradient(#3d3d3d 0%,#333 50%,#2a2a2a 100%);border-top:1px solid #4a4a4a;"></div>
<svg style="left:153px;top:49px;" width="28" height="28" viewBox="0 0 28 28"><path d="M21 7.2H10A5.1 5.1 0 0 0 10 17.4" fill="none" stroke="#62bf84" stroke-width="1.7"/><path d="M15 17.4H20" stroke="#62bf84" stroke-width="1.7"/><path d="M23.6 7.2L19 4.2V10.2Z" fill="#62bf84"/><path d="M6.3 20.3L8.9 23.2L16.8 12.8" stroke="#62bf84" stroke-width="1.9" fill="none"/></svg>
<div style="left:183px;top:49px;width:28px;height:27.4px;background:linear-gradient(#3d3d3d 0%,#333 50%,#2a2a2a 100%);border-top:1px solid #4a4a4a;"></div>
<svg style="left:183px;top:49px;" width="28" height="28" viewBox="0 0 28 28"><path d="M14 5.5H16.6L21.6 22.6H7.8Z" fill="none" stroke="#d4d4d4" stroke-width="1.5"/><path d="M7.4 22.6H22" stroke="#d4d4d4" stroke-width="2"/><path d="M4.8 6.4L14.3 20.7" stroke="#2dc257" stroke-width="1.4"/><circle cx="8.8" cy="12.5" r="2" fill="#2dc257"/></svg>
<div style="left:3px;top:79.2px;width:28px;height:27.6px;background:radial-gradient(ellipse at center,#86938f 0%,#7b8885 55%,#5d6866 100%);"></div>
<svg style="left:3px;top:79.2px;" width="28" height="28" viewBox="0 0 28 28"><rect x="4.5" y="6.2" width="5.9" height="10" fill="#2f8282" stroke="#8fd0cf" stroke-width="0.6"/><rect x="17.8" y="11.4" width="5.9" height="9.8" fill="#2f8282" stroke="#8fd0cf" stroke-width="0.6"/><path d="M10.6 6L10.6 16.2H16.6Z" fill="#1fe36a"/><path d="M17.4 12L17.4 21.4H10.2Z" fill="#1fe36a"/></svg>
<div style="left:33px;top:79.2px;width:28px;height:27.6px;background:radial-gradient(ellipse at center,#86938f 0%,#7b8885 55%,#5d6866 100%);"></div>
<svg style="left:33px;top:79.2px;" width="28" height="28" viewBox="0 0 28 28"><rect x="2.4" y="2.9" width="9.5" height="8.6" fill="#2f8282" stroke="#8fd0cf" stroke-width="0.6"/><rect x="17.1" y="16.2" width="8.6" height="8.2" fill="#2f8282" stroke="#8fd0cf" stroke-width="0.6"/><rect x="16.6" y="3" width="2.6" height="2.8" fill="#2f8282"/><rect x="22.2" y="6" width="3.6" height="5.5" fill="#2f8282"/><rect x="2.4" y="16.6" width="4" height="3" fill="#2f8282"/><rect x="9" y="21.4" width="2.6" height="3" fill="#2f8282"/><g stroke="#f2f2f2" fill="none"><path d="M2.6 25L8 19.6M20.6 7.4L25.4 2.6" stroke-width="1.2"/><path d="M4.4 26.6L9.6 21.4M22 9L27 4" stroke-width="1.2"/><path d="M8.5 20L20 8.5" stroke-width="1.2"/><ellipse cx="11.3" cy="17.2" rx="5.6" ry="3" transform="rotate(-45 11.3 17.2)" stroke-width="1.5"/><ellipse cx="17.2" cy="11.2" rx="5.6" ry="3" transform="rotate(-45 17.2 11.2)" stroke-width="1.5"/></g></svg>
<div style="left:63px;top:79.2px;width:28px;height:27.6px;background:linear-gradient(#3d3d3d 0%,#333 50%,#2a2a2a 100%);border-top:1px solid #4a4a4a;"></div>
<svg style="left:63px;top:79.2px;" width="28" height="28" viewBox="0 0 28 28"><rect x="3.5" y="3.2" width="5.5" height="4" fill="#2f7373" stroke="#6aa9a8" stroke-width="0.6"/><rect x="10.5" y="3.2" width="5.5" height="4" fill="#2f7373" stroke="#6aa9a8" stroke-width="0.6"/><rect x="17.6" y="3.2" width="5.5" height="4" fill="#2f7373" stroke="#6aa9a8" stroke-width="0.6"/><rect x="3.5" y="10.3" width="5.5" height="4" fill="#2f7373" stroke="#6aa9a8" stroke-width="0.6"/><rect x="3.5" y="17.2" width="5.5" height="4" fill="#2f7373" stroke="#6aa9a8" stroke-width="0.6"/><rect x="13.3" y="10.3" width="5.7" height="4" fill="#27b04f" stroke="#5fd985" stroke-width="0.6"/><rect x="20.5" y="10.3" width="5.7" height="4" fill="#27b04f" stroke="#5fd985" stroke-width="0.6"/><rect x="22.6" y="17.4" width="0.8" height="4" fill="#6aa9a8"/><path d="M14.2 11.4Q15.3 10.3 16.4 11.4V16L19.4 16.8Q21.4 17.6 21 20L20.2 24.8H14L11.4 20.2Q11.2 18.6 12.6 18.6L14.2 19.6Z" fill="#bdbdbd"/></svg>
<div style="left:93px;top:79.2px;width:28px;height:27.6px;background:radial-gradient(ellipse at center,#86938f 0%,#7b8885 55%,#5d6866 100%);"></div>
<svg style="left:93px;top:79.2px;" width="28" height="28" viewBox="0 0 28 28"><path d="M1.9 9.6L5.2 7.2V12Z M26.2 9.6L23.3 7.2V12Z M1.9 20.5L5.2 18.1V22.9Z M26.2 20.5L23.3 18.1V22.9Z" fill="#f7f7f7"/><path d="M9 12.9L13.8 5.8L19 11" fill="none" stroke="#f7f7f7" stroke-width="1"/><rect x="7.4" y="11.3" width="3.2" height="3.2" fill="#7b8885" stroke="#f7f7f7" stroke-width="0.9"/><rect x="12.2" y="4.2" width="3.2" height="3.2" fill="#7b8885" stroke="#f7f7f7" stroke-width="0.9"/><rect x="17.4" y="9.4" width="3.2" height="3.2" fill="#7b8885" stroke="#f7f7f7" stroke-width="0.9"/><rect x="7.6" y="17.7" width="12.9" height="5.2" fill="#2f8282" stroke="#8fd0cf" stroke-width="0.7"/></svg>
<div style="left:123px;top:79.2px;width:28px;height:27.6px;background:radial-gradient(ellipse at center,#86938f 0%,#7b8885 55%,#5d6866 100%);"></div>
<svg style="left:123px;top:79.2px;" width="28" height="28" viewBox="0 0 28 28"><line x1="3.5" y1="3.8" x2="3.5" y2="23.8" stroke="#fff" stroke-width="1.3" stroke-dasharray="2.3 1"/><line x1="8.6" y1="3.8" x2="8.6" y2="23.8" stroke="#fff" stroke-width="1.3" stroke-dasharray="2.3 1"/><line x1="13.6" y1="3.8" x2="13.6" y2="23.8" stroke="#fff" stroke-width="1.3" stroke-dasharray="2.3 1"/><line x1="18.6" y1="3.8" x2="18.6" y2="23.8" stroke="#fff" stroke-width="1.3" stroke-dasharray="2.3 1"/><line x1="23.6" y1="3.8" x2="23.6" y2="23.8" stroke="#fff" stroke-width="1.3" stroke-dasharray="2.3 1"/></svg>
<div style="left:153px;top:79.2px;width:28px;height:27.6px;background:radial-gradient(ellipse at center,#86938f 0%,#7b8885 55%,#5d6866 100%);"></div>
<svg style="left:153px;top:79.2px;" width="28" height="28" viewBox="0 0 28 28"><line x1="4.4" y1="3.8" x2="4.4" y2="23.8" stroke="#3df57a" stroke-width="1.3" stroke-dasharray="2.3 1"/><line x1="9.4" y1="3.8" x2="9.4" y2="23.8" stroke="#9aa6a3" stroke-width="0.8" stroke-dasharray="1 2"/><line x1="14.5" y1="3.8" x2="14.5" y2="23.8" stroke="#9aa6a3" stroke-width="0.8" stroke-dasharray="1 2"/><line x1="19.5" y1="3.8" x2="19.5" y2="23.8" stroke="#9aa6a3" stroke-width="0.8" stroke-dasharray="1 2"/><line x1="24.5" y1="3.8" x2="24.5" y2="23.8" stroke="#9aa6a3" stroke-width="0.8" stroke-dasharray="1 2"/><path d="M7.4 7.4H15.4A6.4 6.4 0 0 1 15.4 20.2H7.4" fill="none" stroke="#13d957" stroke-width="3"/><path d="M7.4 7.4H15.4A6.4 6.4 0 0 1 15.4 20.2H7.4" fill="none" stroke="#8dffb4" stroke-width="0.8"/></svg>
<div style="left:183px;top:79.2px;width:28px;height:27.6px;background:linear-gradient(#3d3d3d 0%,#333 50%,#2a2a2a 100%);border-top:1px solid #4a4a4a;"></div>
<svg style="left:183px;top:79.2px;" width="28" height="28" viewBox="0 0 28 28"><rect x="4.3" y="12.4" width="12" height="9.6" rx="0.8" fill="#c3c3c3"/><path d="M6.6 12.6V11A3.7 3.7 0 0 1 14 11V12.6" fill="none" stroke="#c3c3c3" stroke-width="2.4"/><rect x="19.8" y="6.8" width="3.6" height="3.4" fill="none" stroke="#d8d8d8" stroke-width="0.9"/><rect x="19.8" y="13" width="3.6" height="3.4" fill="none" stroke="#d8d8d8" stroke-width="0.9"/><rect x="19.8" y="20.2" width="3.6" height="3.4" fill="none" stroke="#d8d8d8" stroke-width="0.9"/><path d="M19.4 6.4L21.2 8.8L25.2 2.6" fill="none" stroke="#2fca50" stroke-width="1.3"/><path d="M19.4 20L21.2 22.4L25.2 16.2" fill="none" stroke="#2fca50" stroke-width="1.3"/></svg>
<div style="left:2px;top:115px;width:311px;height:80.5px;background:linear-gradient(#fdfdfd 0,#e9eded 3px,#e4e8e8 100%);"></div>
<div style="left:313px;top:115px;width:17.5px;height:80.5px;background:#ffffff;border-left:1px solid #c9cccc;"></div>
<div class="t" style="left:320px;top:118.40px;color:#5f7694;"><i></i><b style="font-size:8.5px;">1</b></div>
<svg style="left:317px;top:186px;" width="9" height="7" viewBox="0 0 9 7"><path d="M0.5 0.5H4L5.5 2.5H8V6.5H0.5Z" fill="#d0d0d0"/></svg>
<div style="left:0px;top:195.5px;width:331px;height:1.5px;background:#262626;"></div>
<div style="left:9px;top:125px;width:199px;height:17px;background:#555555;border-radius:8.5px 2px 2px 8.5px;border-top:1.5px solid #222;border-bottom:1px solid #3a3a3a;"></div>
<svg style="left:9px;top:125px;" width="18" height="18" viewBox="0 0 18 18"><circle cx="8.4" cy="8.5" r="7.6" fill="#1d1d1d"/><circle cx="8.4" cy="8.5" r="6.4" fill="#793339"/><circle cx="8.4" cy="8.5" r="3.3" fill="none" stroke="#dcbcc0" stroke-width="1.3"/></svg>
<div class="t" style="left:152px;top:92.90px;color:#5cc46a;"><i></i><b style="font-size:7.5px;letter-spacing:0.920px;font-family:'Liberation Mono',monospace;">MASTER</b></div>
<div class="t" style="left:152px;top:99.60px;color:#7a7a7a;"><i></i><b style="font-size:6.5px;letter-spacing:0.717px;font-family:'Liberation Mono',monospace;">RCV SND</b></div>
<div style="left:185.5px;top:125.3px;width:21.8px;height:16.6px;background:#242424;border:1px solid #111;border-radius:1px;"></div>
<div class="t" style="left:189.8px;top:96.80px;color:#f0f0f0;"><i></i><b style="font-size:9.8px;letter-spacing:0.266px;">I/O</b></div>
<div style="left:213px;top:125.3px;width:50px;height:16.6px;background:#4a4a4a;border:1.5px solid #2c2c2c;border-radius:1px;"></div>
<div style="left:217px;top:129px;width:10.3px;height:3.8px;background:#00c9c0;"></div>
<div style="left:217px;top:134px;width:10.3px;height:3.8px;background:#00c9c0;"></div>
<div style="left:228px;top:129.5px;width:31px;height:8px;background:#515151;border-top:1px solid #3c3c3c;"></div>
<div class="t" style="left:234.5px;top:96.10px;color:#c3cdcd;"><i></i><b style="font-size:9.4px;letter-spacing:-0.106px;">-31.3</b></div>
<div style="left:269.3px;top:125.3px;width:16.3px;height:16.3px;background:linear-gradient(#f0f0f0,#cfcfcf);border:1px solid #9a9a9a;border-radius:2px;box-shadow:0 1px 0 #bdbdbd;"></div>
<div class="t" style="left:273.5px;top:97.00px;color:#7c1212;"><i></i><b style="font-size:10px;font-weight:bold;">M</b></div>
<div style="left:289.3px;top:125.3px;width:16.3px;height:16.3px;background:linear-gradient(#f0f0f0,#cfcfcf);border:1px solid #9a9a9a;border-radius:2px;box-shadow:0 1px 0 #bdbdbd;"></div>
<div class="t" style="left:294.2px;top:97.00px;color:#6a6a12;"><i></i><b style="font-size:10px;font-weight:bold;">S</b></div>
<div style="left:9.8px;top:148.8px;width:196px;height:14px;background:#464646;border-radius:2.5px;border:1px solid #2e2e2e;"></div>
<div style="left:26.7px;top:154.3px;width:135.6px;height:2.6px;background:#262626;border-radius:1px;box-shadow:0 1px 0 #8a8a8a;"></div>
<div style="left:112px;top:148.6px;width:25px;height:13.8px;background:linear-gradient(90deg,#fbfbfb 0%,#d9d9d9 18%,#f4f4f4 32%,#cfcfcf 50%,#f6f6f6 68%,#d6d6d6 84%,#fafafa 100%);border-radius:2px;box-shadow:0 3px 3px rgba(60,60,60,0.45);"></div>
<div style="left:124px;top:151px;width:1.2px;height:9px;background:#222;"></div>
<div class="t" style="left:186.2px;top:118.90px;color:#9fb0c2;"><i></i><b style="font-size:9.43px;letter-spacing:-0.117px;">0.00</b></div>
<div style="left:221px;top:148px;width:41px;height:14.5px;background:#7d8b8b;border-radius:0 2px 2px 0;"></div>
<svg style="left:212px;top:147px;" width="18" height="18" viewBox="0 0 18 18"><circle cx="8.8" cy="9.6" r="7.6" fill="#8d9595" opacity="0.6"/><circle cx="8.8" cy="8.6" r="7.3" fill="#f3f3f3" stroke="#a9afaf" stroke-width="0.9"/><rect x="8.3" y="2.6" width="1.1" height="3.6" fill="#333"/></svg>
<div class="t" style="left:234px;top:118.50px;color:#e6eeee;"><i></i><b style="font-size:9.18px;letter-spacing:-0.102px;">center</b></div>
<div style="left:269px;top:147.3px;width:36.6px;height:16.2px;background:linear-gradient(#5cb875 0%,#3f9c5a 50%,#2f8a4b 100%);border:1px solid #2a6e3d;border-radius:2px;"></div>
<div style="left:292.3px;top:148.3px;width:1px;height:14.2px;background:#2a7540;"></div>
<div class="t" style="left:273.2px;top:118.50px;color:#0b3f17;"><i></i><b style="font-size:9.6px;font-weight:bold;letter-spacing:1.533px;">F X</b></div>
<svg style="left:294px;top:149.5px;" width="11" height="12" viewBox="0 0 11 12"><path d="M3.4 3.6A3.6 3.6 0 1 0 7.2 3.6" fill="none" stroke="#0d4a1d" stroke-width="1.2"/><path d="M5.3 1.6V6" stroke="#0d4a1d" stroke-width="1.2"/></svg>
<div style="left:9.1px;top:170.3px;width:41.8px;height:14.4px;background:#7d8b8b;border:1px solid #66726f;border-radius:2px;"></div>
<div style="left:10px;top:171.2px;width:13.5px;height:12.6px;background:#98a5a5;"></div>
<svg style="left:10px;top:171px;" width="14" height="13" viewBox="0 0 14 13"><path d="M2 10.5L6.5 4L11.5 8.5" fill="none" stroke="#2e3636" stroke-width="1.1"/></svg>
<div class="t" style="left:27.4px;top:140.80px;color:#eef2f2;"><i></i><b style="font-size:7.93px;font-weight:bold;letter-spacing:-0.126px;">TRIM</b></div>
<svg style="left:57px;top:170px;" width="16" height="16" viewBox="0 0 16 16"><circle cx="7.6" cy="7.6" r="7" fill="#94a0a0" stroke="#6d7878" stroke-width="1"/><circle cx="7.6" cy="7.6" r="3.6" fill="none" stroke="#3c4444" stroke-width="1"/><path d="M3.6 11.6L11.6 3.6" stroke="#3c4444" stroke-width="1"/></svg>
<div style="left:78px;top:170.3px;width:129px;height:14.4px;background:#73817f;border-radius:1px 7.2px 7.2px 1px;border-top:1px solid #5e6a68;"></div>
<div class="t" style="left:82.2px;top:140.80px;color:#e3ebeb;"><i></i><b style="font-size:9.71px;letter-spacing:-0.088px;">Line In 1 Fast Track</b></div>
<svg style="left:192.5px;top:170.3px;" width="15" height="15" viewBox="0 0 15 15"><circle cx="7.4" cy="7.3" r="6.6" fill="#8f9b9b" stroke="#5f6b6b" stroke-width="0.8"/><path d="M4.2 5.6H10.6L7.4 9.8Z" fill="#3d4545"/></svg>
<div style="left:269.3px;top:170.1px;width:36.3px;height:14.5px;background:#7f8d8d;border:1px solid #66726f;border-radius:2px;"></div>
<div style="left:270.2px;top:171px;width:13px;height:12.7px;background:#a3afaf;"></div>
<svg style="left:270px;top:171px;" width="14" height="13" viewBox="0 0 14 13"><path d="M4.8 2.8L9.6 6.4L4.8 10Z" fill="none" stroke="#4a5454" stroke-width="1"/></svg>
<div class="t" style="left:285.9px;top:141.00px;color:#f2f6f6;"><i></i><b style="font-size:7.6px;font-weight:bold;display:inline-block;transform:scaleX(0.8);transform-origin:0 50%;">IN</b></div>
<div class="t" style="left:292.6px;top:141.00px;color:#9caaa9;"><i></i><b style="font-size:7.6px;font-weight:bold;display:inline-block;transform:scaleX(0.72);transform-origin:0 50%;">OUT</b></div>
<div style="left:0px;top:436px;width:331px;height:1px;background:#555555;"></div>
<div class="t" style="left:6px;top:407.50px;color:#bdbdbd;"><i></i><b style="font-size:9.81px;letter-spacing:-0.088px;">Track 1 [items] 2 [FX] 1</b></div>
<div style="left:0px;top:455px;width:1304px;height:41.5px;background:#3b3b3b;border-top:1px solid #4a4a4a;border-bottom:1px solid #222;border-radius:3px;"></div>
<div style="left:5px;top:460px;width:147px;height:31px;background:#111;border-radius:15.5px;"></div>
<div style="left:6.3px;top:461.3px;width:26.6px;height:28.4px;background:linear-gradient(#5a5a5a 0%,#474747 45%,#303030 55%,#262626 100%);border-radius:14.2px 0 0 14.2px;"></div>
<div style="left:34.2px;top:461.3px;width:28.4px;height:28.4px;background:linear-gradient(#5a5a5a 0%,#474747 45%,#303030 55%,#262626 100%);border-radius:0;"></div>
<div style="left:63.8px;top:461.3px;width:29.4px;height:28.4px;background:linear-gradient(#4c8c4e 0%,#3a793d 45%,#2b692f 55%,#28622b 100%);border-radius:0;"></div>
<div style="left:94.4px;top:461.3px;width:28.6px;height:28.4px;background:linear-gradient(#5a5a5a 0%,#474747 45%,#303030 55%,#262626 100%);border-radius:0;"></div>
<div style="left:124.2px;top:461.3px;width:26.6px;height:28.4px;background:linear-gradient(#5a5a5a 0%,#474747 45%,#303030 55%,#262626 100%);border-radius:0 14.2px 14.2px 0;"></div>
<svg style="left:5px;top:460px;" width="147" height="31" viewBox="0 0 147 31"><defs><linearGradient id="sv" x1="0" y1="0" x2="0" y2="1"><stop offset="0" stop-color="#ededed"/><stop offset="1" stop-color="#9d9d9d"/></linearGradient></defs><rect x="9.6" y="10.6" width="3.2" height="9.8" fill="url(#sv)"/><path d="M22 10.6V20.4L12.8 15.5Z" fill="url(#sv)"/><rect x="38.9" y="10.6" width="9.6" height="9.6" fill="url(#sv)"/><path d="M68 10.7L80.6 15.5L68 20.4Z" fill="#35d873" stroke="#9df0bd" stroke-width="0.7"/><rect x="97.8" y="10.6" width="3.5" height="9.8" fill="url(#sv)"/><rect x="105.4" y="10.6" width="3.5" height="9.8" fill="url(#sv)"/><path d="M124.8 10.6V20.4L134 15.5Z" fill="url(#sv)"/><rect x="134" y="10.6" width="3.2" height="9.8" fill="url(#sv)"/></svg>
<svg style="left:154px;top:459px;" width="33" height="33" viewBox="0 0 33 33"><defs><linearGradient id="rc" x1="0" y1="0" x2="0" y2="1"><stop offset="0" stop-color="#80494e"/><stop offset="0.5" stop-color="#67363b"/><stop offset="0.52" stop-color="#53292d"/><stop offset="1" stop-color="#492327"/></linearGradient></defs><circle cx="16.4" cy="16.3" r="15.4" fill="#161616"/><circle cx="16.4" cy="16.3" r="14.3" fill="url(#rc)"/><circle cx="16.4" cy="16.3" r="4.6" fill="none" stroke="#dcc0c3" stroke-width="2.2"/></svg>
<svg style="left:188px;top:459px;" width="33" height="33" viewBox="0 0 33 33"><defs><linearGradient id="rp" x1="0" y1="0" x2="0" y2="1"><stop offset="0" stop-color="#459c54"/><stop offset="0.5" stop-color="#308441"/><stop offset="0.52" stop-color="#226f38"/><stop offset="1" stop-color="#1e6632"/></linearGradient></defs><circle cx="16.5" cy="16.3" r="15.4" fill="#121212"/><circle cx="16.5" cy="16.3" r="14.3" fill="url(#rp)"/><path d="M11.3 18.8A5.6 5.6 0 0 1 19.6 11.4" fill="none" stroke="#62f0a0" stroke-width="1.5"/><path d="M21.7 13.8A5.6 5.6 0 0 1 13.4 21.2" fill="none" stroke="#62f0a0" stroke-width="1.5"/><path d="M17.8 9.2L21.4 11.8L17.6 13.6Z" fill="#62f0a0"/><path d="M15.2 23.4L11.6 20.8L15.4 19Z" fill="#62f0a0"/></svg>
<div style="left:227.6px;top:459.3px;width:58px;height:31px;background:#3d3d3d;border:1px solid #1f1f1f;border-radius:3px;box-shadow:inset 0 1px 0 #4d4d4d;"></div>
<div class="t" style="left:231px;top:429.90px;color:#bcbcbc;"><i></i><b style="font-size:7.17px;font-weight:bold;letter-spacing:-0.105px;">GLOBAL AUTO</b></div>
<div style="left:230.5px;top:474.5px;width:52.4px;height:12.3px;background:#474747;border:1px solid #262626;border-radius:1px;"></div>
<div style="left:231.5px;top:475.5px;width:14.8px;height:10.3px;background:#595959;"></div>
<svg style="left:231.5px;top:475.5px;" width="15" height="10" viewBox="0 0 15 10"><path d="M3 8.6L7.6 2.6L11.6 6.2" fill="none" stroke="#2c2c2c" stroke-width="1"/></svg>
<div class="t" style="left:251.8px;top:443.90px;color:#7e7e7e;"><i></i><b style="font-size:7.84px;font-weight:bold;letter-spacing:-0.150px;">NONE</b></div>
<div style="left:294px;top:459.3px;width:700px;height:31px;background:#383838;border:1px solid #1f1f1f;border-radius:3px;"></div>
<div class="t" style="left:302.2px;top:441.60px;color:#a9b3be;"><i></i><b style="font-size:21.7px;-webkit-text-stroke:0.55px #a9b3be;">1.2.30</b></div>
<div style="left:0px;top:496.5px;width:1304px;height:1px;background:#222;"></div>
<div style="left:2px;top:497.5px;width:118.5px;height:47px;background:#2c2c2c;"></div>
<div style="left:120.5px;top:497.5px;width:73px;height:61px;background:#2c2c2c;border-left:1px solid #444;"></div>
<div style="left:3.7px;top:506.9px;width:21.7px;height:28.3px;background:linear-gradient(#b6c1c1,#a3b0b0);border:1px solid #7f8b8b;border-radius:1px;"></div>
<div style="left:4.7px;top:520.2px;width:19.7px;height:1px;background:#8a9696;"></div>
<svg style="left:9px;top:508.5px;" width="11" height="11" viewBox="0 0 11 11"><path d="M3.4 3.4A3.4 3.4 0 1 0 7.4 3.4" fill="none" stroke="#56625f" stroke-width="1.1"/><path d="M5.4 1.4V5.6" stroke="#56625f" stroke-width="1.1"/></svg>
<div class="t" style="left:7.6px;top:491.00px;color:#5b6866;"><i></i><b style="font-size:9.44px;letter-spacing:-0.143px;">F X</b></div>
<div style="left:30.5px;top:506.9px;width:38.2px;height:13.6px;background:#1f1f1f;border:1px solid #4a4a4a;border-radius:1px;"></div>
<div class="t" style="left:39.3px;top:477.10px;color:#f2f2f2;"><i></i><b style="font-size:10.37px;letter-spacing:-0.097px;">I / O</b></div>
<div class="t" style="left:30.6px;top:494.90px;color:#b9c5d2;"><i></i><b style="font-size:10.72px;letter-spacing:-0.174px;">MASTER</b></div>
<div style="left:1px;top:544px;width:120px;height:208.6px;background:linear-gradient(#abb8b8 0%,#a3b0b0 40%,#8b9999 100%);border-left:2px solid #c3cdcd;border-top:1px solid #c8d2d2;border-right:1px solid #2a2a2a;border-bottom:1px solid #2a2a2a;"></div>
<div style="left:8.5px;top:555.5px;width:40.2px;height:14px;background:linear-gradient(#bcc7c7,#aab6b6);border:1px solid #74817f;border-radius:1px;"></div>
<div class="t" style="left:13.6px;top:525.90px;color:#47534f;"><i></i><b style="font-size:9.31px;letter-spacing:-0.187px;">MONO</b></div>
<div style="left:67px;top:555.5px;width:45.6px;height:14px;background:#707f7f;border-radius:0 2px 2px 0;"></div>
<svg style="left:54px;top:550px;" width="26" height="26" viewBox="0 0 26 26"><circle cx="13.2" cy="12.8" r="11.8" fill="#5f6d6d"/><circle cx="13.2" cy="12.8" r="9.8" fill="#dfe4e4" stroke="#8b9797" stroke-width="0.8"/><rect x="12.7" y="2.4" width="1.1" height="7" fill="#2b3232"/></svg>
<div class="t" style="left:84.2px;top:525.90px;color:#e3ebeb;"><i></i><b style="font-size:9.47px;letter-spacing:-0.104px;">center</b></div>
<div style="left:9.3px;top:583.3px;width:79.6px;height:160.4px;background:#3b3b3b;border:1px solid #1c1c1c;border-radius:2px;"></div>
<div style="left:17.1px;top:600px;width:3px;height:129.7px;background:#1a1a1a;border-radius:1px;"></div>
<div style="left:12px;top:620.3px;width:13.2px;height:30.2px;background:linear-gradient(#fdfdfd 0%,#d2d2d2 15%,#f5f5f5 30%,#c9c9c9 49%,#f0f0f0 52%,#dadada 80%,#f8f8f8 100%);border-radius:2px;box-shadow:0 2px 3px rgba(0,0,0,0.5);"></div>
<div style="left:14.5px;top:635px;width:8.2px;height:1.1px;background:#222;"></div>
<div style="left:30.2px;top:602.7px;width:7.5px;height:138.3px;background:#2b2b2b;"></div>
<div style="left:44px;top:602.7px;width:11.3px;height:138.3px;background:#2b2b2b;"></div>
<div style="left:62.1px;top:602.7px;width:11.3px;height:138.3px;background:#2b2b2b;"></div>
<div style="left:79.5px;top:602.7px;width:7.8px;height:138.3px;background:#2b2b2b;"></div>
<div style="left:44px;top:705px;width:11.3px;height:36px;background:#1fc9c1;"></div>
<div style="left:62.1px;top:705px;width:11.3px;height:36px;background:#1fc9c1;"></div>
<div style="left:30.2px;top:717.1px;width:7.5px;height:23.9px;background:#3ec81c;"></div>
<div style="left:79.5px;top:717.1px;width:7.8px;height:23.9px;background:#3ec81c;"></div>
<div style="left:30.2px;top:625.3px;width:7.5px;height:8.8px;background:linear-gradient(#9a9a9a,#6a6a6a);"></div>
<div style="left:79.5px;top:625.3px;width:7.8px;height:8.8px;background:linear-gradient(#9a9a9a,#6a6a6a);"></div>
<div class="t" style="left:30.6px;top:571.50px;color:#f4f4f4;"><i></i><b style="font-size:9.2px;font-weight:bold;text-shadow:0 0 1px #000;letter-spacing:-0.3px;">12</b></div>
<div class="t" style="right:1216.6px;top:571.50px;color:#f4f4f4;"><i></i><b style="font-size:9.2px;font-weight:bold;text-shadow:0 0 1px #000;letter-spacing:-0.3px;">12</b></div>
<div class="t" style="left:30.6px;top:584.50px;color:#f4f4f4;"><i></i><b style="font-size:9.2px;font-weight:bold;text-shadow:0 0 1px #000;letter-spacing:-0.3px;">6</b></div>
<div class="t" style="right:1216.6px;top:584.50px;color:#f4f4f4;"><i></i><b style="font-size:9.2px;font-weight:bold;text-shadow:0 0 1px #000;letter-spacing:-0.3px;">6</b></div>
<div class="t" style="left:30.6px;top:596.80px;color:#f4f4f4;"><i></i><b style="font-size:9.2px;font-weight:bold;text-shadow:0 0 1px #000;letter-spacing:-0.3px;">0-</b></div>
<div class="t" style="right:1216.6px;top:596.80px;color:#f4f4f4;"><i></i><b style="font-size:9.2px;font-weight:bold;text-shadow:0 0 1px #000;letter-spacing:-0.3px;">-0</b></div>
<div class="t" style="left:30.6px;top:610.50px;color:#f4f4f4;"><i></i><b style="font-size:9.2px;font-weight:bold;text-shadow:0 0 1px #000;letter-spacing:-0.3px;">6-</b></div>
<div class="t" style="right:1216.6px;top:610.50px;color:#f4f4f4;"><i></i><b style="font-size:9.2px;font-weight:bold;text-shadow:0 0 1px #000;letter-spacing:-0.3px;">-6</b></div>
<div class="t" style="left:30.6px;top:624.30px;color:#f4f4f4;"><i></i><b style="font-size:9.2px;font-weight:bold;text-shadow:0 0 1px #000;letter-spacing:-0.3px;">12-</b></div>
<div class="t" style="right:1216.6px;top:624.30px;color:#f4f4f4;"><i></i><b style="font-size:9.2px;font-weight:bold;text-shadow:0 0 1px #000;letter-spacing:-0.3px;">-12</b></div>
<div class="t" style="left:30.6px;top:637.00px;color:#f4f4f4;"><i></i><b style="font-size:9.2px;font-weight:bold;text-shadow:0 0 1px #000;letter-spacing:-0.3px;">18-</b></div>
<div class="t" style="right:1216.6px;top:637.00px;color:#f4f4f4;"><i></i><b style="font-size:9.2px;font-weight:bold;text-shadow:0 0 1px #000;letter-spacing:-0.3px;">-18</b></div>
<div class="t" style="left:30.6px;top:651.20px;color:#f4f4f4;"><i></i><b style="font-size:9.2px;font-weight:bold;text-shadow:0 0 1px #000;letter-spacing:-0.3px;">24-</b></div>
<div class="t" style="right:1216.6px;top:651.20px;color:#f4f4f4;"><i></i><b style="font-size:9.2px;font-weight:bold;text-shadow:0 0 1px #000;letter-spacing:-0.3px;">-24</b></div>
<div class="t" style="left:30.6px;top:663.80px;color:#f4f4f4;"><i></i><b style="font-size:9.2px;font-weight:bold;text-shadow:0 0 1px #000;letter-spacing:-0.3px;">30-</b></div>
<div class="t" style="right:1216.6px;top:663.80px;color:#f4f4f4;"><i></i><b style="font-size:9.2px;font-weight:bold;text-shadow:0 0 1px #000;letter-spacing:-0.3px;">-30</b></div>
<div class="t" style="left:30.6px;top:676.40px;color:#f4f4f4;"><i></i><b style="font-size:9.2px;font-weight:bold;text-shadow:0 0 1px #000;letter-spacing:-0.3px;">36-</b></div>
<div class="t" style="right:1216.6px;top:676.40px;color:#f4f4f4;"><i></i><b style="font-size:9.2px;font-weight:bold;text-shadow:0 0 1px #000;letter-spacing:-0.3px;">-36</b></div>
<div class="t" style="left:30.6px;top:690.40px;color:#f4f4f4;"><i></i><b style="font-size:9.2px;font-weight:bold;text-shadow:0 0 1px #000;letter-spacing:-0.3px;">42-</b></div>
<div class="t" style="right:1216.6px;top:690.40px;color:#f4f4f4;"><i></i><b style="font-size:9.2px;font-weight:bold;text-shadow:0 0 1px #000;letter-spacing:-0.3px;">-42</b></div>
<div class="t" style="left:59.2px;transform:translateX(-50%);top:579.00px;color:#f4f4f4;"><i></i><b style="font-size:9.2px;font-weight:bold;text-shadow:0 0 1px #000;letter-spacing:-0.3px;">-6-</b></div>
<div class="t" style="left:59.2px;transform:translateX(-50%);top:606.00px;color:#f4f4f4;"><i></i><b style="font-size:9.2px;font-weight:bold;text-shadow:0 0 1px #000;letter-spacing:-0.3px;">-18-</b></div>
<div class="t" style="left:59.2px;transform:translateX(-50%);top:633.10px;color:#f4f4f4;"><i></i><b style="font-size:9.2px;font-weight:bold;text-shadow:0 0 1px #000;letter-spacing:-0.3px;">-30-</b></div>
<div class="t" style="left:59.2px;transform:translateX(-50%);top:660.00px;color:#f4f4f4;"><i></i><b style="font-size:9.2px;font-weight:bold;text-shadow:0 0 1px #000;letter-spacing:-0.3px;">-42-</b></div>
<div class="t" style="left:59.2px;transform:translateX(-50%);top:687.20px;color:#f4f4f4;"><i></i><b style="font-size:9.2px;font-weight:bold;text-shadow:0 0 1px #000;letter-spacing:-0.3px;">-54-</b></div>
<div class="t" style="left:34px;top:559.00px;color:#ffffff;"><i></i><b style="font-size:9.04px;font-weight:bold;letter-spacing:-0.101px;">-31.3</b></div>
<div class="t" style="left:62.9px;top:559.00px;color:#ffffff;"><i></i><b style="font-size:9.04px;font-weight:bold;letter-spacing:-0.101px;">-31.3</b></div>
<div class="t" style="left:34px;top:698.60px;color:#f6f680;"><i></i><b style="font-size:9.04px;letter-spacing:-0.101px;">-28.0</b></div>
<div class="t" style="left:62.9px;top:698.60px;color:#f6f680;"><i></i><b style="font-size:9.04px;letter-spacing:-0.101px;">-28.0</b></div>
<div style="left:96.8px;top:582.5px;width:15.6px;height:16.4px;background:linear-gradient(#f0f0f0,#cfcfcf);border:1px solid #9a9a9a;border-radius:2px;box-shadow:0 1px 0 #bdbdbd;"></div>
<div class="t" style="left:100.6px;top:554.60px;color:#7c1212;"><i></i><b style="font-size:10px;font-weight:bold;">M</b></div>
<div style="left:96.8px;top:603.4px;width:15.6px;height:16.4px;background:linear-gradient(#f0f0f0,#cfcfcf);border:1px solid #9a9a9a;border-radius:2px;box-shadow:0 1px 0 #bdbdbd;"></div>
<div class="t" style="left:101.4px;top:575.50px;color:#6a6a12;"><i></i><b style="font-size:10px;font-weight:bold;">S</b></div>
<div style="left:96.8px;top:624.8px;width:15.6px;height:11.8px;background:#b3bfbf;border:1px solid #76837f;border-radius:1px;"></div>
<svg style="left:96.8px;top:624.8px;" width="16" height="12" viewBox="0 0 16 12"><path d="M3.4 9.2L8 3.6L12.4 7.4" fill="none" stroke="#2f3836" stroke-width="1"/></svg>
<div style="left:96.8px;top:637.9px;width:15.6px;height:10.6px;background:#7d8b8b;border:1px solid #6a7774;border-radius:1px;"></div>
<div class="t" style="left:99.8px;top:606.10px;color:#f0f4f4;"><i></i><b style="font-size:7.35px;font-weight:bold;letter-spacing:-0.197px;">TR</b></div>
<svg style="left:96px;top:698px;" width="25" height="38" viewBox="0 0 25 38"><path d="M25 0Q23 9 12 10Q1.5 12 1.2 20V27Q1.6 35 11 36H25Z" fill="#3a3a3a"/><g stroke="#b4b4b4" stroke-width="1"><path d="M8 17V33M12.5 17V33M17 17V33M21.5 17V33"/></g><g fill="#b4b4b4"><rect x="6.6" y="22" width="2.8" height="3.2"/><rect x="11.1" y="19" width="2.8" height="3.2"/><rect x="15.6" y="26" width="2.8" height="3.2"/><rect x="20.1" y="22.6" width="2.8" height="3.2"/><path d="M16.4 11L19 15H13.8Z"/></g></svg>
<div style="left:124.9px;top:506.7px;width:21.7px;height:28.4px;background:linear-gradient(#5fbc77,#3f9d5a);border:1px solid #2f7a45;border-radius:1px;"></div>
<div style="left:125.9px;top:520.2px;width:19.7px;height:1px;background:#2f7f47;"></div>
<svg style="left:130.3px;top:508.4px;" width="11" height="11" viewBox="0 0 11 11"><path d="M3.4 3.4A3.4 3.4 0 1 0 7.4 3.4" fill="none" stroke="#0f5523" stroke-width="1.2"/><path d="M5.4 1.4V5.6" stroke="#0f5523" stroke-width="1.2"/></svg>
<div class="t" style="left:128.7px;top:491.00px;color:#0d4a1d;"><i></i><b style="font-size:9.44px;font-weight:bold;letter-spacing:-0.143px;">F X</b></div>
<div style="left:151.9px;top:506.7px;width:36.9px;height:28.4px;background:#1f1f1f;border:1px solid #4a4a4a;border-radius:1px;"></div>
<div class="t" style="left:154.6px;top:474.60px;color:#5cc46a;"><i></i><b style="font-size:7.5px;letter-spacing:0.920px;font-family:'Liberation Mono',monospace;">MASTER</b></div>
<div class="t" style="left:154.6px;top:481.40px;color:#666;"><i></i><b style="font-size:6.5px;letter-spacing:0.717px;font-family:'Liberation Mono',monospace;">RCV SND</b></div>
<div class="t" style="left:160.8px;top:491.70px;color:#f2f2f2;"><i></i><b style="font-size:10.04px;letter-spacing:-0.092px;">I / O</b></div>
<div style="left:121.5px;top:558.2px;width:72px;height:176px;background:#dfe4e4;border-left:1px solid #f4f6f6;"></div>
<div style="left:121.5px;top:733.6px;width:72px;height:18px;background:#ffffff;border-top:1px solid #9aa;"></div>
<div class="t" style="left:156.6px;transform:translateX(-50%);top:706.50px;color:#333;"><i></i><b style="font-size:11.5px;">1</b></div>
<div style="left:139.5px;top:576px;width:46.1px;height:13.2px;background:#7a8888;border-radius:0 2px 2px 0;"></div>
<svg style="left:127px;top:570px;" width="26" height="26" viewBox="0 0 26 26"><circle cx="12.6" cy="12.8" r="11.2" fill="#6e7b7b"/><circle cx="12.6" cy="12.8" r="9.3" fill="#e6eaea" stroke="#9aa5a5" stroke-width="0.8"/><rect x="12.1" y="3" width="1.1" height="6.6" fill="#2b3232"/></svg>
<div class="t" style="left:157.2px;top:545.70px;color:#e3ebeb;"><i></i><b style="font-size:9.4px;letter-spacing:-0.105px;">center</b></div>
<svg style="left:127px;top:607px;" width="70" height="120" viewBox="0 0 70 120"><path d="M3 1.6H34Q35.6 1.6 35.6 3.2V86Q36 96 44 98Q54 101 54 109Q53 117 44 118H3Q1.5 118 1.5 116.4V3.2Q1.5 1.6 3 1.6Z" fill="#3a3a3a" stroke="#1e1e1e" stroke-width="1"/></svg>
<div style="left:137.4px;top:628.2px;width:2.6px;height:81.6px;background:#1a1a1a;border-radius:1px;"></div>
<div style="left:132px;top:635.3px;width:12.8px;height:30.2px;background:linear-gradient(#fdfdfd 0%,#d2d2d2 15%,#f5f5f5 30%,#c9c9c9 49%,#f0f0f0 52%,#dadada 80%,#f8f8f8 100%);border-radius:2px;box-shadow:0 2px 3px rgba(0,0,0,0.5);"></div>
<div style="left:134.4px;top:650px;width:8px;height:1.1px;background:#222;"></div>
<div style="left:148.4px;top:615.7px;width:4.2px;height:106.6px;background:#2b2b2b;"></div>
<div style="left:154px;top:615.7px;width:4.3px;height:106.6px;background:#2b2b2b;"></div>
<div style="left:148.4px;top:615.7px;width:10px;height:5px;background:#454545;"></div>
<div style="left:148.4px;top:696.7px;width:4.2px;height:25.6px;background:#1fc9c1;"></div>
<div style="left:154px;top:696.7px;width:4.3px;height:25.6px;background:#1fc9c1;"></div>
<svg style="left:160px;top:705px;" width="21" height="21" viewBox="0 0 21 21"><circle cx="10.4" cy="10.3" r="9.4" fill="#1c1c1c"/><circle cx="10.4" cy="10.3" r="8.3" fill="#7c2c30"/><circle cx="10.4" cy="10.3" r="3.6" fill="none" stroke="#e4cfd0" stroke-width="1.5"/></svg>
<div style="left:169.3px;top:609.3px;width:16.3px;height:14.3px;background:linear-gradient(#f0f0f0,#cfcfcf);border:1px solid #9a9a9a;border-radius:2px;box-shadow:0 1px 0 #bdbdbd;"></div>
<div class="t" style="left:173.4px;top:580.60px;color:#7c1212;"><i></i><b style="font-size:10px;font-weight:bold;">M</b></div>
<div style="left:169.3px;top:629.9px;width:16.3px;height:14.2px;background:linear-gradient(#f0f0f0,#cfcfcf);border:1px solid #9a9a9a;border-radius:2px;box-shadow:0 1px 0 #bdbdbd;"></div>
<div class="t" style="left:174.2px;top:601.20px;color:#6a6a12;"><i></i><b style="font-size:10px;font-weight:bold;">S</b></div>
<div style="left:169.3px;top:650.2px;width:16.3px;height:11.7px;background:#a9b5b5;border:1px solid #76837f;border-radius:1px;"></div>
<svg style="left:169.3px;top:650.2px;" width="16" height="12" viewBox="0 0 16 12"><path d="M6 2.8L10.6 5.9L6 9Z" fill="none" stroke="#4a5452" stroke-width="1"/></svg>
<div style="left:169.3px;top:667.2px;width:16.3px;height:11.8px;background:#b3bfbf;border:1px solid #76837f;border-radius:1px;"></div>
<svg style="left:169.3px;top:667.2px;" width="16" height="12" viewBox="0 0 16 12"><path d="M3.6 9.2L8.2 3.6L12.6 7.4" fill="none" stroke="#2f3836" stroke-width="1"/></svg>
<div style="left:0px;top:752.6px;width:1304px;height:15.4px;background:#4a4a4a;"></div>
<svg style="left:0px;top:752px;" width="80" height="16" viewBox="0 0 80 16"><path d="M4.5 0.8L11 14H65.3L71.3 0.8Z" fill="#c6cdcd" stroke="#e0e5e5" stroke-width="0.6"/><path d="M3.8 4V9.6M3.8 11.4V12.8" stroke="#c8c8e0" stroke-width="1.2"/><rect x="53.6" y="4.6" width="8" height="8" fill="none" stroke="#2b2b2b" stroke-width="1"/><path d="M55.2 6.2L60 11M60 6.2L55.2 11" stroke="#2b2b2b" stroke-width="1"/></svg>
<div class="t" style="left:19.4px;top:724.00px;color:#30303c;"><i></i><b style="font-size:10.54px;font-weight:bold;letter-spacing:-0.133px;">Mixer</b></div>
<div style="left:1286px;top:115px;width:18px;height:322px;background:#363636;"></div>
<div style="left:1288px;top:115.5px;width:14.4px;height:281px;background:#4c4c4c;border-radius:2px;"></div>
<div style="left:1289px;top:134.2px;width:11.6px;height:245px;background:linear-gradient(90deg,#4a4a4a 0%,#2e2e2e 25%,#232323 60%,#1d1d1d 100%);border-radius:5.8px;border:1px solid #141414;"></div>
<svg style="left:1287.9px;top:116.7px;" width="13.2" height="14.2" viewBox="0 0 13.2 14.2"><circle cx="6.6" cy="7.3" r="5.6" fill="#1e1e1e"/><circle cx="6.6" cy="6.6" r="5.3" fill="#ababab"/><circle cx="6.6" cy="6.6" r="4.7" fill="none" stroke="#d2d2d2" stroke-width="0.7"/><path d="M3.8 8.3H9.4L6.6 4.4Z" fill="#111"/></svg>
<svg style="left:1287.9px;top:382.6px;" width="13.2" height="14.2" viewBox="0 0 13.2 14.2"><circle cx="6.6" cy="7.3" r="5.6" fill="#1e1e1e"/><circle cx="6.6" cy="6.6" r="5.3" fill="#ababab"/><circle cx="6.6" cy="6.6" r="4.7" fill="none" stroke="#d2d2d2" stroke-width="0.7"/><path d="M3.8 5H9.4L6.6 9Z" fill="#111"/></svg>
<svg style="left:1287.9px;top:399.9px;" width="13.2" height="14.2" viewBox="0 0 13.2 14.2"><circle cx="6.6" cy="7.3" r="5.6" fill="#1e1e1e"/><circle cx="6.6" cy="6.6" r="5.3" fill="#ababab"/><circle cx="6.6" cy="6.6" r="4.7" fill="none" stroke="#d2d2d2" stroke-width="0.7"/><path d="M3.6 6.6H9.6M6.6 3.6V9.6" stroke="#111" stroke-width="1.3"/></svg>
<div style="left:1290px;top:416.5px;width:9px;height:1.2px;background:#777;"></div>
<svg style="left:1287.9px;top:420.9px;" width="13.2" height="14.2" viewBox="0 0 13.2 14.2"><circle cx="6.6" cy="7.3" r="5.6" fill="#1e1e1e"/><circle cx="6.6" cy="6.6" r="5.3" fill="#ababab"/><circle cx="6.6" cy="6.6" r="4.7" fill="none" stroke="#d2d2d2" stroke-width="0.7"/><path d="M3.6 6.6H9.6" stroke="#111" stroke-width="1.3"/></svg>
<div style="left:339px;top:436px;width:965px;height:1px;background:#2a2a2a;"></div>
<div style="left:339px;top:437.5px;width:894px;height:13px;background:#555555;border-radius:2px;"></div>
<svg style="left:340px;top:437.9px;" width="13" height="14" viewBox="0 0 13 14"><circle cx="6.5" cy="7.2" r="5.5" fill="#1e1e1e"/><circle cx="6.5" cy="6.5" r="5.2" fill="#ababab"/><circle cx="6.5" cy="6.5" r="4.6" fill="none" stroke="#d2d2d2" stroke-width="0.7"/><path d="M8 3.6V9.4L4.4 6.5Z" fill="#222"/></svg>
<svg style="left:1232.8px;top:437.9px;" width="13" height="14" viewBox="0 0 13 14"><circle cx="6.5" cy="7.2" r="5.5" fill="#1e1e1e"/><circle cx="6.5" cy="6.5" r="5.2" fill="#ababab"/><circle cx="6.5" cy="6.5" r="4.6" fill="none" stroke="#d2d2d2" stroke-width="0.7"/><path d="M5.2 3.6V9.4L9 6.5Z" fill="#222"/></svg>
<svg style="left:1249.7px;top:437.9px;" width="13" height="14" viewBox="0 0 13 14"><circle cx="6.5" cy="7.2" r="5.5" fill="#1e1e1e"/><circle cx="6.5" cy="6.5" r="5.2" fill="#ababab"/><circle cx="6.5" cy="6.5" r="4.6" fill="none" stroke="#d2d2d2" stroke-width="0.7"/><path d="M3.6 6.5H9.4M6.5 3.6V9.4" stroke="#222" stroke-width="1.3"/></svg>
<div style="left:1266.6px;top:440px;width:1.2px;height:9px;background:#777;"></div>
<svg style="left:1271.1px;top:437.9px;" width="13" height="14" viewBox="0 0 13 14"><circle cx="6.5" cy="7.2" r="5.5" fill="#1e1e1e"/><circle cx="6.5" cy="6.5" r="5.2" fill="#ababab"/><circle cx="6.5" cy="6.5" r="4.6" fill="none" stroke="#d2d2d2" stroke-width="0.7"/><path d="M3.6 6.5H9.4" stroke="#222" stroke-width="1.3"/></svg>
<div style="left:1000px;top:468.9px;width:290.5px;height:13.5px;background:#2d2d2d;border:1px solid #1a1a1a;border-radius:3px;"></div>
<div style="left:1233px;top:469.9px;width:1px;height:11.5px;background:#444;"></div>
<div class="t" style="left:1194.5px;top:438.70px;color:#8aa0b6;"><i></i><b style="font-size:8.44px;letter-spacing:-0.093px;">1.4.00</b></div>
<div class="t" style="left:1248px;top:438.70px;color:#8aa0b6;"><i></i><b style="font-size:9.65px;letter-spacing:-0.105px;">0.2.00</b></div>
<div style="left:353px;top:217.5px;width:840.3px;height:523.5px;background:#ebebeb;border:1px solid #e2e2e2;border-left-color:#f2f2f2;border-bottom-color:#f4f4f4;"></div>
<div style="left:360.5px;top:247.5px;width:825px;height:485.7px;background:#f0f0f0;border:1px solid #fbfbfb;"></div>
<div style="left:361.5px;top:248.5px;width:823px;height:18.5px;background:#f6f7f8;"></div>
<div class="t" style="left:738.6px;top:198.00px;color:#0a0a0a;"><i></i><b style="font-size:15px;display:inline-block;transform:scaleX(0.906359);transform-origin:0 50%;">FX: Track 1</b></div>
<div class="t" style="left:368.3px;top:222.30px;color:#6e6e6e;"><i></i><b style="font-size:10.14px;letter-spacing:-0.257px;">FX</b></div>
<div class="t" style="left:395px;top:222.30px;color:#6e6e6e;"><i></i><b style="font-size:11.84px;letter-spacing:-0.134px;">Edit</b></div>
<div class="t" style="left:429.3px;top:222.30px;color:#6e6e6e;"><i></i><b style="font-size:12px;letter-spacing:0.058px;">Options</b></div>
<svg style="left:1140px;top:221px;" width="17" height="19" viewBox="0 0 17 19"><path d="M3.8 1.3H13.4L11.7 3V7.2L15.6 9.8V10.8H10V15.6L8.7 17.4L7.4 15.6V10.8H1.6V9.8L6.6 7.2V3Z" fill="#ffffff" stroke="#808080" stroke-width="0.9" stroke-linejoin="round"/><path d="M9.6 3.2V7.4" stroke="#555" stroke-width="0.9"/></svg>
<div style="left:1165.1px;top:223px;width:18.9px;height:19px;background:#b1b1b1;"></div>
<svg style="left:1170.5px;top:229px;" width="8" height="8" viewBox="0 0 8 8"><path d="M1.5 1.4L6.5 6.2M6.5 1.4L1.5 6.2" stroke="#fff" stroke-width="1.7"/></svg>
<div style="left:364.3px;top:270px;width:200.6px;height:414.3px;background:#fff;border:1px solid #828790;"></div>
<div style="left:371.3px;top:273.5px;width:13.3px;height:13px;background:#fff;border:1.6px solid #262626;box-shadow:0 0 0 0.5px #9a9a9a;"></div>
<svg style="left:371.3px;top:273.5px;" width="13" height="13" viewBox="0 0 13 13"><path d="M3.2 6.4L5.8 9.2L10 3.4" fill="none" stroke="#000" stroke-width="2.1"/></svg>
<div style="left:389.3px;top:272.4px;width:174px;height:16px;background:#f0f0f0;"></div>
<div class="t" style="left:390.8px;top:244.40px;color:#000000;"><i></i><b style="font-size:10.75px;letter-spacing:-0.108px;">VST: ReaFir (FFT EQ+Dynamics ...</b></div>
<div style="left:365.4px;top:690px;width:42.4px;height:19.5px;background:linear-gradient(#f0f0f0,#e3e3e3);border:1px solid #acacac;"></div>
<div class="t" style="left:377px;top:664.10px;color:#000000;"><i></i><b style="font-size:10.72px;letter-spacing:-0.187px;">Add</b></div>
<div style="left:413px;top:690px;width:47.7px;height:19.5px;background:linear-gradient(#f0f0f0,#e3e3e3);border:1px solid #acacac;"></div>
<div class="t" style="left:417.6px;top:664.10px;color:#000000;"><i></i><b style="font-size:10.63px;letter-spacing:-0.156px;">Remove</b></div>
<div class="t" style="left:364.2px;top:685.40px;color:#000000;"><i></i><b style="font-size:10.87px;letter-spacing:-0.114px;">3.5%/3.5% CPU 4096/4096 spls</b></div>
<div style="left:571px;top:270.4px;width:588.6px;height:19.8px;background:#fff;border:1px solid #abadb3;"></div>
<div style="left:1165.3px;top:270.7px;width:17.5px;height:19.4px;background:linear-gradient(#f0f0f0,#e3e3e3);border:1px solid #acacac;"></div>
<div class="t" style="left:1169.5px;top:244.50px;color:#000000;"><i></i><b style="font-size:10.4px;letter-spacing:-0.084px;">...</b></div>
<div style="left:576.2px;top:297px;width:383.2px;height:19.6px;background:linear-gradient(#efefef,#e4e4e4);border:1px solid #acacac;"></div>
<svg style="left:946.4px;top:303.8px;" width="9" height="6" viewBox="0 0 9 6"><path d="M0.8 0.8L4.5 4.6L8.2 0.8" fill="none" stroke="#3c3c3c" stroke-width="1.3"/></svg>
<div class="t" style="left:580.9px;top:270.90px;color:#000000;"><i></i><b style="font-size:10.31px;letter-spacing:-0.112px;">No preset</b></div>
<div style="left:965.4px;top:297.8px;width:15.2px;height:17.2px;background:linear-gradient(#f0f0f0,#e3e3e3);border:1px solid #acacac;"></div>
<div class="t" style="left:970px;top:270.00px;color:#000000;"><i></i><b style="font-size:11px;">+</b></div>
<div style="left:986.3px;top:297.8px;width:42.6px;height:17.2px;background:linear-gradient(#f0f0f0,#e3e3e3);border:1px solid #acacac;"></div>
<div class="t" style="left:992.5px;top:269.50px;color:#000000;"><i></i><b style="font-size:10.04px;letter-spacing:-0.142px;">Param</b></div>
<div style="left:1034.6px;top:297.8px;width:72px;height:17.2px;background:linear-gradient(#f0f0f0,#e3e3e3);border:1px solid #acacac;"></div>
<div class="t" style="left:1048.5px;top:269.50px;color:#000000;"><i></i><b style="font-size:10.54px;letter-spacing:-0.096px;">2 in 2 out</b></div>
<div style="left:1112.3px;top:297.8px;width:22.9px;height:17.2px;background:linear-gradient(#f0f0f0,#e3e3e3);border:1px solid #acacac;"></div>
<div class="t" style="left:1118px;top:269.50px;color:#000000;"><i></i><b style="font-size:10.81px;letter-spacing:-0.210px;">UI</b></div>
<svg style="left:1140.8px;top:297.3px;" width="18" height="18" viewBox="0 0 18 18"><circle cx="9" cy="9" r="7.8" fill="#fafafa" stroke="#5a5a5a" stroke-width="1"/><path d="M10.6 12.2L12.8 15" stroke="#222" stroke-width="1.3"/></svg>
<div style="left:1167.3px;top:299.8px;width:13.2px;height:13.2px;background:#fff;border:1px solid #6e6e6e;"></div>
<svg style="left:1167.3px;top:299.8px;" width="13.2" height="13.2" viewBox="0 0 13.2 13.2"><path d="M2.9 6.3L5.7 9.3L10.3 3.1" fill="none" stroke="#000" stroke-width="2.1"/></svg>
<div style="left:574.7px;top:327px;width:601.3px;height:398px;border:1px solid #dcdcdc;"></div>
<div style="left:581.5px;top:321px;width:64.5px;height:12px;background:#f0f0f0;"></div>
<div class="t" style="left:583.5px;top:291.00px;color:#000000;"><i></i><b style="font-size:10.78px;letter-spacing:-0.110px;">ReaFir v1.75</b></div>
<div style="left:584px;top:338.3px;width:57.7px;height:20.4px;background:linear-gradient(#f0f0f0,#e3e3e3);border:1px solid #acacac;"></div>
<div class="t" style="left:599.6px;top:312.70px;color:#000000;"><i></i><b style="font-size:10.54px;letter-spacing:-0.133px;">Reset</b></div>
<div class="t" style="left:651.3px;top:312.70px;color:#000000;"><i></i><b style="font-size:10.56px;letter-spacing:-0.109px;">Edit mode:</b></div>
<div style="left:706px;top:339.4px;width:98.7px;height:20.3px;background:linear-gradient(#efefef,#e4e4e4);border:1px solid #acacac;"></div>
<svg style="left:791.7px;top:346.55px;" width="9" height="6" viewBox="0 0 9 6"><path d="M0.8 0.8L4.5 4.6L8.2 0.8" fill="none" stroke="#3c3c3c" stroke-width="1.3"/></svg>
<div class="t" style="left:710.7px;top:314.00px;color:#000000;"><i></i><b style="font-size:10.37px;letter-spacing:-0.113px;">Precise</b></div>
<div class="t" style="left:810.3px;top:312.70px;color:#000000;"><i></i><b style="font-size:10.5px;letter-spacing:-0.114px;">FFT Size:</b></div>
<div style="left:863.8px;top:339.4px;width:73.5px;height:20.3px;background:linear-gradient(#efefef,#e4e4e4);border:1px solid #acacac;"></div>
<svg style="left:924.3px;top:346.55px;" width="9" height="6" viewBox="0 0 9 6"><path d="M0.8 0.8L4.5 4.6L8.2 0.8" fill="none" stroke="#3c3c3c" stroke-width="1.3"/></svg>
<div class="t" style="left:868.2px;top:314.00px;color:#000000;"><i></i><b style="font-size:10.78px;letter-spacing:-0.160px;">4096</b></div>
<div style="left:948px;top:343.2px;width:13px;height:13px;background:#fff;border:1px solid #6e6e6e;"></div>
<div class="t" style="left:964.3px;top:313.80px;color:#000000;"><i></i><b style="font-size:10.6px;letter-spacing:-0.093px;">ReaFir 0.x compatibility mode (low quality)</b></div>
<div class="t" style="left:585.3px;top:341.00px;color:#000000;"><i></i><b style="font-size:10.61px;letter-spacing:-0.146px;">Mode:</b></div>
<div style="left:622px;top:367px;width:86.7px;height:20.8px;background:linear-gradient(#efefef,#e4e4e4);border:1px solid #acacac;"></div>
<svg style="left:695.7px;top:374.4px;" width="9" height="6" viewBox="0 0 9 6"><path d="M0.8 0.8L4.5 4.6L8.2 0.8" fill="none" stroke="#3c3c3c" stroke-width="1.3"/></svg>
<div class="t" style="left:626.5px;top:342.00px;color:#000000;"><i></i><b style="font-size:10.49px;letter-spacing:-0.109px;">Subtract</b></div>
<div style="left:717.2px;top:371.2px;width:13px;height:13px;background:#fff;border:1px solid #6e6e6e;"></div>
<svg style="left:717.2px;top:371.2px;" width="13" height="13" viewBox="0 0 13 13"><path d="M2.9 6.3L5.7 9.3L10.3 3.1" fill="none" stroke="#000" stroke-width="2.1"/></svg>
<div class="t" style="left:733.2px;top:342.00px;color:#000000;"><i></i><b style="font-size:10.63px;letter-spacing:-0.093px;">Automatically build noise profile (enable during noise)</b></div>
<div style="left:583.4px;top:701.4px;width:12.6px;height:12.6px;background:#fff;border:1px solid #6e6e6e;"></div>
<svg style="left:583.4px;top:701.4px;" width="12.6" height="12.6" viewBox="0 0 12.6 12.6"><path d="M2.9 6.3L5.7 9.3L10.3 3.1" fill="none" stroke="#000" stroke-width="2.1"/></svg>
<div class="t" style="left:600px;top:671.40px;color:#000000;"><i></i><b style="font-size:10.52px;letter-spacing:-0.094px;">Show analysis, floor:</b></div>
<div style="left:701.9px;top:698.2px;width:38.7px;height:19.4px;background:#fff;border:1px solid #abadb3;"></div>
<div class="t" style="left:704.8px;top:671.40px;color:#000000;"><i></i><b style="font-size:10.92px;letter-spacing:-0.122px;">-90.0</b></div>
<div class="t" style="left:741.5px;top:671.40px;color:#000000;"><i></i><b style="font-size:10.84px;letter-spacing:-0.259px;">dB</b></div>
<div class="t" style="left:1007.2px;top:671.40px;color:#000000;"><i></i><b style="font-size:10.67px;letter-spacing:-0.088px;">Hint: shift draws line, ctrl moves all</b></div>
<div style="left:1120px;top:397px;width:38.8px;height:22.6px;background:#fff;border:1px solid #abadb3;"></div>
<div class="t" style="left:1123.9px;top:371.50px;color:#000000;"><i></i><b style="font-size:10.28px;letter-spacing:-0.169px;">+24</b></div>
<div class="t" style="left:1137.6px;top:402.80px;color:#000000;"><i></i><b style="font-size:10.64px;letter-spacing:-0.128px;">Output</b></div>
<div class="t" style="left:1144.4px;top:415.50px;color:#000000;"><i></i><b style="font-size:10.46px;letter-spacing:-0.125px;">Gain:</b></div>
<div style="left:1144.4px;top:461.7px;width:19.2px;height:174.6px;background:linear-gradient(90deg,#cfcfcf,#dedede 50%,#cfcfcf);border:1px solid #a8a8a8;border-radius:3px;"></div>
<div style="left:1152px;top:478.9px;width:3.8px;height:142px;background:#747474;border-radius:1px;"></div>
<div style="left:1147.6px;top:503px;width:13.6px;height:30.4px;background:linear-gradient(#ffffff 0%,#d4d4d4 14%,#f6f6f6 30%,#cbcbcb 49%,#efefef 53%,#d6d6d6 82%,#fafafa 100%);border-radius:2.5px;box-shadow:0 1px 2px rgba(0,0,0,0.45);"></div>
<div style="left:1149px;top:517.9px;width:10.8px;height:1.1px;background:#1c1c1c;"></div>
<div style="left:1137.2px;top:641.2px;width:35.4px;height:21.4px;background:#fff;border:1px solid #abadb3;"></div>
<div class="t" style="left:1144px;top:613.60px;color:#000000;"><i></i><b style="font-size:10.75px;letter-spacing:-0.140px;">+0.0</b></div>
<div style="left:1119.5px;top:670.2px;width:39.5px;height:22.8px;background:#fff;border:1px solid #abadb3;"></div>
<div class="t" style="left:1122.8px;top:644.20px;color:#000000;"><i></i><b style="font-size:10.59px;letter-spacing:-0.152px;">-90</b></div>
<div style="left:583px;top:397px;width:531px;height:296px;background:#000;"></div>
<svg style="left:583px;top:397px;" width="531" height="296" viewBox="0 0 531 296"><rect x="51.0" y="0" width="1" height="280.5" fill="#686868"/><rect x="83.0" y="0" width="1" height="280.5" fill="#686868"/><rect x="124.0" y="0" width="1" height="280.5" fill="#686868"/><rect x="151.0" y="0" width="1" height="280.5" fill="#686868"/><rect x="171.0" y="0" width="1" height="280.5" fill="#686868"/><rect x="188.0" y="0" width="1" height="280.5" fill="#686868"/><rect x="202.0" y="0" width="1" height="280.5" fill="#686868"/><rect x="214.0" y="0" width="1" height="280.5" fill="#686868"/><rect x="224.0" y="0" width="1" height="280.5" fill="#686868"/><rect x="233.0" y="0" width="1" height="280.5" fill="#686868"/><rect x="241.0" y="0" width="1" height="280.5" fill="#686868"/><rect x="297.0" y="0" width="1" height="280.5" fill="#686868"/><rect x="330.0" y="0" width="1" height="280.5" fill="#686868"/><rect x="354.0" y="0" width="1" height="280.5" fill="#686868"/><rect x="373.0" y="0" width="1" height="280.5" fill="#686868"/><rect x="388.0" y="0" width="1" height="280.5" fill="#686868"/><rect x="401.0" y="0" width="1" height="280.5" fill="#686868"/><rect x="412.0" y="0" width="1" height="280.5" fill="#686868"/><rect x="422.0" y="0" width="1" height="280.5" fill="#686868"/><rect x="430.0" y="0" width="1" height="280.5" fill="#686868"/><rect x="438.0" y="0" width="1" height="280.5" fill="#686868"/><rect x="446.0" y="0" width="1" height="280.5" fill="#686868"/><rect x="452.0" y="0" width="1" height="280.5" fill="#686868"/><rect x="458.0" y="0" width="1" height="280.5" fill="#686868"/><rect x="464.0" y="0" width="1" height="280.5" fill="#686868"/><rect x="488.0" y="0" width="1" height="280.5" fill="#686868"/><rect x="503.0" y="0" width="1" height="280.5" fill="#686868"/><rect x="0" y="28.0" width="503.5" height="1" fill="#686868"/><rect x="0" y="58.0" width="503.5" height="1" fill="#686868"/><rect x="0" y="88.0" width="503.5" height="1" fill="#686868"/><rect x="0" y="117.0" width="503.5" height="1" fill="#686868"/><rect x="0" y="146.0" width="503.5" height="1" fill="#686868"/><rect x="0" y="176.0" width="503.5" height="1" fill="#686868"/><rect x="0" y="206.0" width="503.5" height="1" fill="#686868"/><rect x="0" y="235.0" width="503.5" height="1" fill="#686868"/><rect x="0" y="264.0" width="503.5" height="1" fill="#686868"/><rect x="0" y="280" width="503.5" height="1" fill="#686868"/><path d="M0.5 207.4 L7.5 169.9 L11.0 158.0 L13.9 153.5 L16.5 156.0 L19.3 162.8 L26.3 188.6 L32.2 206.2 L35.7 210.9 L39.2 207.4 L45.0 193.3 L49.7 183.9 L56.8 194.5 L62.6 212.0 L66.8 215.6 L72.0 212.0 L77.9 209.2 L83.7 213.2 L89.6 221.4 L93.1 221.4 L101.3 207.8 L107.2 218.6 L111.4 221.4 L115.4 217.4 L120.0 219.1 L124.7 239.0 L128.2 237.4 L133.4 251.4 L138.3 235.5 L140.7 242.5 L144.2 235.0 L149.8 252.6 L153.6 235.5 L156.4 239.0 L159.4 226.1 L162.9 250.7 L165.3 248.4 L167.4 253.8 L170.0 243.7 L172.8 251.9 L175.1 247.2 L177.0 250.7 L178.8 250.8 L180.6 252.6 L182.4 253.7 L184.2 255.8 L186.0 254.0 L187.8 256.5 L189.6 247.2 L191.4 252.5 L193.2 258.2 L195.0 255.4 L196.8 258.7 L198.6 250.5 L200.4 254.9 L202.2 252.9 L204.0 256.7 L205.8 257.5 L207.6 251.8 L209.4 254.4 L211.2 255.4 L213.0 262.8 L214.8 261.5 L216.6 255.2 L218.4 262.6 L220.2 255.7 L222.0 261.4 L223.8 256.4 L225.6 255.3 L227.4 265.3 L229.2 258.4 L231.0 258.8 L232.8 267.6 L234.6 266.8 L236.4 260.7 L238.2 268.5 L240.0 264.2 L241.8 266.0 L243.6 261.0 L245.4 269.2 L247.2 263.6 L249.0 266.7 L250.8 266.1 L252.6 259.7 L254.4 260.5 L256.2 258.5 L258.0 258.4 L259.8 257.7 L261.6 260.4 L263.4 263.9 L265.2 257.4 L267.0 265.0 L268.8 262.2 L270.1 262.3 L271.4 266.0 L272.7 263.9 L274.0 263.0 L275.3 264.4 L276.6 266.2 L277.9 262.0 L279.2 268.5 L280.5 262.2 L281.8 267.4 L283.1 268.3 L284.4 262.9 L285.7 268.4 L287.0 265.8 L288.3 267.4 L289.6 263.8 L290.9 264.3 L292.2 265.5 L293.5 271.0 L294.8 266.0 L296.1 270.1 L297.4 271.5 L298.7 271.7 L300.0 267.7 L301.3 267.9 L302.6 269.2 L303.9 271.0 L305.2 266.6 L306.5 271.0 L307.8 271.5 L309.1 272.0 L310.4 266.5 L311.7 272.8 L313.0 267.1 L314.3 268.9 L315.6 270.9 L316.9 273.1 L318.2 267.3 L319.5 271.4 L320.8 268.9 L322.1 267.4 L323.4 267.6 L324.7 266.8 L326.0 266.2 L327.3 266.8 L328.6 270.6 L329.9 272.8 L331.2 267.2 L332.5 266.6 L333.8 273.2 L335.1 270.3 L336.4 269.6 L337.7 268.7 L339.0 271.3 L340.3 273.0 L341.6 270.7 L342.9 270.7 L344.2 268.4 L345.5 274.4 L346.8 268.6 L348.1 271.9 L349.4 274.4 L350.7 269.8 L352.0 274.1 L353.3 275.7 L354.6 273.8 L355.9 275.0 L357.2 270.6 L358.5 273.0 L359.8 271.2 L361.1 276.1 L362.4 272.6 L363.7 273.9 L365.0 277.8 L366.3 276.9 L367.6 278.0 L368.9 274.6 L370.2 275.0 L371.5 276.8 L372.8 275.3 L374.1 274.2 L375.4 275.1 L376.7 273.4 L378.0 275.1 L379.3 279.4 L380.6 279.3 L381.9 277.1 L383.2 276.4 L384.5 275.4 L385.8 273.8 L387.1 275.2 L388.4 278.7 L389.7 279.4 L391.0 276.1 L392.3 279.1 L393.6 279.1 L394.9 278.7 L396.2 278.6 L397.5 279.4 L398.8 276.8 L400.1 279.2 L401.4 276.5 L402.7 278.0 L404.0 280.0 L405.3 279.6 L406.6 277.0 L407.9 280.0 L409.2 279.7 L410.5 279.3 L411.8 275.6 L413.1 279.3 L414.4 277.4 L415.7 280.0 L417.0 279.1 L418.3 280.0" fill="none" stroke="#84845c" stroke-width="1"/><path d="M0.5 170.6 L14.6 171.5 L27.5 184.4 L38.7 184.4 L48.6 178.5 L57.5 190.5 L65.0 192.4 L78.6 204.6 L84.9 202.7 L90.3 210.2 L96.6 202.7 L106.7 217.4 L110.0 213.9 L114.2 212.5 L123.1 221.4 L130.1 223.3 L134.1 227.8 L137.1 223.8 L142.3 233.9 L145.1 235.5 L149.3 229.6 L154.5 230.8 L159.4 223.8 L163.9 235.0 L166.2 235.0 L169.3 239.0 L171.6 237.1 L175.1 241.4 L177.0 239.0 L178.5 240.1 L180.0 241.2 L181.5 244.3 L183.0 241.4 L184.5 242.1 L186.0 243.0 L187.5 240.5 L189.0 243.3 L190.5 244.5 L192.0 246.1 L193.5 241.5 L195.0 243.4 L196.5 242.3 L198.0 247.8 L199.5 247.4 L201.0 243.1 L202.5 250.3 L204.0 250.5 L205.5 248.7 L207.0 248.8 L208.5 245.8 L210.0 245.1 L211.5 249.1 L213.0 246.1 L214.5 247.3 L216.0 248.0 L217.5 246.8 L218.4 250.1 L219.3 250.1 L220.2 253.2 L221.1 251.0 L222.0 252.1 L222.9 251.3 L223.8 252.6 L224.7 251.3 L225.6 250.2 L226.5 255.6 L227.4 255.8 L228.3 254.8 L229.2 254.1 L230.1 251.4 L231.0 251.0 L231.9 251.6 L232.8 250.2 L233.7 255.4 L234.6 253.0 L235.5 256.4 L236.4 253.2 L237.3 257.5 L238.2 256.9 L239.1 251.0 L240.0 252.7 L240.9 257.9 L241.8 254.8 L242.7 258.6 L243.6 254.5 L244.5 252.2 L245.4 256.3 L246.3 257.4 L247.2 253.8 L248.1 252.6 L249.0 254.4 L249.9 259.0 L250.8 257.6 L251.7 253.1 L252.6 254.1 L253.5 253.1 L254.4 252.9 L255.3 258.2 L256.2 253.8 L257.1 256.7 L258.0 255.9 L258.9 254.1 L259.8 258.1 L260.7 253.9 L261.6 257.6 L262.5 253.9 L263.4 256.2 L264.3 254.7 L265.2 255.2 L266.1 260.3 L267.0 259.2 L267.9 255.8 L268.8 260.1 L269.7 255.4 L270.6 256.9 L271.5 260.4 L272.4 259.0 L273.3 255.3 L274.2 261.8 L275.1 256.4 L276.0 256.9 L276.9 260.8 L277.8 257.7 L278.4 257.6 L279.0 256.1 L279.6 256.4 L280.2 260.0 L280.8 257.7 L281.4 260.4 L282.0 258.8 L282.6 259.5 L283.2 263.3 L283.8 260.0 L284.4 260.7 L285.0 262.9 L285.6 258.1 L286.2 258.0 L286.8 263.6 L287.4 263.0 L288.0 259.0 L288.6 258.7 L289.2 262.8 L289.8 264.4 L290.4 259.1 L291.0 264.6 L291.6 264.3 L292.2 262.4 L292.8 261.2 L293.4 259.0 L294.0 258.6 L294.6 265.4 L295.2 260.3 L295.8 263.8 L296.4 260.6 L297.0 264.8 L297.6 263.2 L298.2 261.1 L298.8 260.3 L299.4 264.3 L300.0 259.7 L300.6 260.9 L301.2 263.3 L301.8 265.5 L302.4 263.8 L303.0 261.4 L303.6 266.1 L304.2 261.0 L304.8 259.7 L305.4 261.6 L306.0 262.9 L306.6 260.2 L307.2 261.1 L307.8 262.5 L308.4 264.0 L309.0 260.9 L309.6 262.6 L310.2 266.5 L310.8 267.2 L311.4 264.9 L312.0 265.2 L312.6 264.5 L313.2 261.3 L313.8 260.6 L314.4 260.6 L315.0 267.0 L315.6 265.6 L316.2 267.5 L316.8 260.8 L317.4 265.8 L317.8 266.9 L318.2 270.0 L318.6 264.9 L319.0 268.9 L319.4 266.8 L319.8 269.2 L320.2 266.6 L320.6 268.7 L321.0 267.9 L321.4 265.5 L321.8 263.4 L322.2 265.9 L322.6 266.3 L323.0 269.0 L323.4 263.6 L323.8 265.8 L324.2 268.7 L324.6 261.1 L325.0 264.8 L325.4 267.2 L325.8 266.3 L326.2 257.5 L326.6 267.1 L327.0 261.4 L327.4 267.0 L327.8 269.6 L328.2 267.1 L328.6 264.5 L329.0 270.0 L329.4 264.1 L329.8 263.3 L330.2 265.4 L330.6 269.4 L331.0 270.5 L331.4 261.9 L331.8 263.1 L332.2 264.7 L332.6 265.7 L333.0 269.6 L333.4 265.3 L333.8 260.7 L334.2 260.8 L334.6 266.8 L335.0 265.5 L335.4 257.6 L335.8 263.2 L336.2 261.2 L336.6 265.7 L337.0 268.1 L337.4 271.5 L337.8 263.1 L338.2 257.1 L338.6 269.0 L339.0 264.1 L339.4 268.9 L339.8 268.0 L340.2 265.6 L340.6 271.4 L341.0 271.8 L341.4 262.8 L341.8 268.4 L342.2 265.7 L342.6 271.4 L343.0 272.2 L343.4 269.0 L343.8 269.8 L344.2 269.0 L344.6 264.2 L345.0 272.9 L345.4 268.0 L345.8 265.6 L346.2 271.7 L346.6 263.1 L347.0 268.3 L347.4 259.8 L347.8 263.0 L348.2 264.3 L348.6 271.2 L349.0 264.1 L349.4 270.6 L349.8 270.3 L350.2 268.2 L350.6 263.7 L351.0 268.7 L351.4 271.0 L351.8 268.7 L352.2 269.2 L352.6 267.3 L353.0 273.1 L353.4 272.6 L353.8 269.0 L354.2 265.5 L354.6 268.9 L355.0 263.6 L355.4 269.2 L355.8 272.4 L356.2 269.0 L356.6 264.3 L357.0 268.2 L357.4 274.0 L357.8 269.0 L358.2 268.6 L358.6 273.9 L359.0 267.5 L359.4 270.9 L359.8 265.5 L360.2 264.3 L360.6 266.7 L361.0 267.8 L361.4 271.2 L361.8 272.5 L362.2 270.1 L362.6 266.6 L363.0 269.4 L363.4 269.2 L363.8 266.4 L364.2 271.7 L364.6 270.6 L365.0 271.6 L365.4 267.4 L365.8 273.9 L366.2 268.5 L366.6 275.3 L367.0 276.2 L367.4 266.6 L367.8 273.3 L368.2 266.3 L368.6 270.0 L369.0 266.7 L369.4 268.9 L369.8 273.1 L370.2 276.3 L370.6 271.2 L371.0 271.2 L371.4 267.8 L371.8 260.6 L372.2 271.6 L372.6 267.5 L373.0 268.2 L373.4 277.0 L373.8 258.3 L374.2 271.2 L374.6 269.7 L375.0 271.8 L375.4 265.6 L375.8 275.6 L376.2 271.3 L376.6 270.7 L377.0 268.1 L377.4 266.5 L377.8 275.3 L378.2 276.0 L378.6 270.9 L379.0 272.1 L379.4 275.5 L379.8 276.7 L380.2 275.2 L380.6 271.1 L381.0 276.4 L381.4 275.2 L381.8 271.2 L382.2 267.5 L382.6 266.8 L383.0 273.9 L383.4 269.4 L383.8 274.3 L384.2 274.3 L384.6 272.9 L385.0 278.1 L385.4 274.8 L385.8 271.3 L386.2 275.3 L386.6 267.4 L387.0 271.3 L387.4 270.0 L387.8 273.3 L388.2 278.0 L388.6 278.4 L389.0 276.3 L389.4 274.0 L389.8 267.9 L390.2 269.2 L390.6 269.3 L391.0 265.6 L391.4 272.2 L391.8 274.2 L392.2 270.8 L392.6 273.9 L393.0 275.7 L393.4 267.8 L393.8 268.2 L394.2 276.2 L394.6 277.8 L395.0 268.4 L395.4 278.4 L395.8 278.0 L396.2 273.2 L396.6 270.7 L397.0 278.5 L397.4 273.2 L397.8 277.2 L398.2 269.4 L398.6 273.2 L399.0 268.7 L399.4 269.6 L399.8 275.7 L400.2 271.2 L400.6 273.0 L401.0 274.3 L401.4 279.0 L401.8 271.1 L402.2 278.4 L402.6 275.5 L403.0 271.5 L403.4 274.9 L403.8 275.7 L404.2 270.7 L404.6 279.6 L405.0 275.6 L405.4 271.7 L405.8 275.7 L406.2 274.8 L406.6 269.8 L407.0 275.0 L407.4 273.1 L407.8 271.3 L408.2 277.3 L408.6 269.8 L409.0 278.1 L409.4 277.7 L409.8 273.8 L410.2 278.2 L410.6 276.5 L411.0 272.8 L411.4 277.6 L411.8 274.1 L412.2 270.4 L412.6 270.2 L413.0 275.7 L413.4 277.1 L413.8 278.1 L414.2 271.9 L414.6 270.4 L415.0 277.7 L415.4 272.8 L415.8 273.6 L416.2 273.8 L416.6 277.6 L417.0 280.0 L417.4 280.0 L417.8 278.8 L418.2 273.4 L418.6 280.4 L419.0 272.7 L419.4 274.0 L419.8 274.4 L420.2 272.2 L420.6 279.0 L421.0 279.5 L421.4 272.1 L421.8 280.0 L422.2 270.5 L422.6 276.3 L423.0 280.6 L423.4 275.0 L423.8 279.2 L424.2 271.3 L424.6 280.5 L425.0 277.6 L425.4 278.8 L425.8 273.3 L426.2 279.1 L426.6 279.2 L427.0 274.4 L427.4 278.0 L427.8 276.7 L428.2 278.5 L428.6 275.5 L429.0 278.1 L429.4 279.5 L429.8 280.3 L430.2 277.9 L430.6 278.6 L431.0 275.8 L431.4 273.2 L431.8 280.6 L432.2 273.5 L432.6 276.0 L433.0 278.3 L433.4 273.2 L433.8 279.3 L434.2 272.8 L434.6 277.6 L435.0 272.7 L435.4 274.1 L435.8 274.6 L436.2 277.8 L436.6 274.2 L437.0 274.2 L437.4 275.4 L437.8 279.8 L438.2 275.1 L438.6 280.6 L439.0 277.6 L439.4 277.0 L439.8 273.5 L440.2 279.7 L440.6 277.5 L441.0 275.5 L441.4 278.6 L441.8 273.5 L442.2 276.4 L442.6 279.1 L443.0 274.8 L443.4 276.1 L443.8 280.3 L444.2 278.6 L444.6 275.8 L445.0 275.0 L445.4 274.0 L445.8 280.2 L446.2 274.7 L446.6 279.3 L447.0 277.6 L447.4 280.6 L447.8 280.3 L448.2 279.8 L448.6 280.6 L449.0 280.1 L449.4 278.2 L449.8 275.7 L450.2 276.8 L450.6 275.3 L451.0 277.8 L451.4 277.2 L451.8 275.6 L452.2 277.9 L452.6 280.2 L453.0 275.2 L453.4 279.5 L453.8 278.6 L454.2 275.4 L454.6 280.0 L455.0 279.0 L455.4 277.7 L455.8 277.3 L456.2 277.8 L456.6 277.1 L457.0 279.7 L457.4 280.6 L457.8 279.7 L458.2 280.3 L458.6 276.8 L459.0 279.5 L459.4 277.1 L459.8 280.3 L460.2 276.7 L460.6 277.1 L461.0 278.3 L461.4 280.6 L461.8 278.9 L462.2 280.1 L462.6 278.4 L463.0 277.0 L463.4 279.8 L463.8 280.2 L464.2 278.1 L464.6 278.4 L465.0 277.5 L465.4 279.1 L465.8 280.4 L466.2 277.9 L466.6 280.6 L467.0 278.7 L467.4 277.9 L467.8 280.6 L468.2 280.1 L468.6 278.3 L469.0 279.8 L469.4 278.0 L469.8 279.7 L470.2 278.9 L470.6 279.0 L471.0 278.4 L471.4 278.5 L471.8 279.7 L472.2 279.8 L472.6 280.6 L473.0 280.5 L473.4 278.7 L473.8 279.2 L474.2 279.1 L474.6 280.6 L475.0 279.9 L475.4 278.8 L475.8 280.6 L476.2 280.2 L476.6 280.3 L477.0 279.7 L477.4 279.9 L477.8 279.9 L478.2 279.8 L478.6 279.5 L479.0 279.7 L479.4 279.8 L479.8 279.4 L480.2 279.6 L480.6 280.3 L481.0 280.1 L481.4 280.5 L481.8 280.6 L482.2 280.6 L482.6 280.6 L483.0 280.2 L483.4 280.6 L483.8 280.3 L484.2 280.6 L484.6 280.0 L485.0 280.6 L485.4 280.4 L485.8 280.2 L486.2 280.1 L486.6 280.3 L487.0 279.6 L487.4 280.4 L487.8 280.2 L488.2 279.4 L488.6 280.6 L489.0 280.6 L489.4 280.6 L489.8 280.5 L490.2 280.6 L490.6 280.6 L491.0 280.4 L491.4 280.1 L491.8 280.3 L492.2 280.1 L492.6 280.6 L493.0 280.3 L493.4 279.3 L493.8 280.3 L494.2 280.6 L494.6 280.4 L495.0 280.3 L495.4 280.6 L495.8 280.6 L496.2 280.4 L496.6 280.6 L497.0 280.3 L497.4 280.3 L497.8 280.2 L498.2 280.6 L498.6 280.6 L499.0 280.6 L499.4 280.6 L499.8 280.4 L500.2 280.3 L500.6 280.6 L501.0 280.3 L501.4 280.6 L501.8 280.4 L502.2 280.6 L502.6 280.3 L503.0 280.6" fill="none" stroke="#ff0000" stroke-width="1.1"/></svg>
<div class="t" style="left:635px;transform:translateX(-50%);top:649.70px;color:#9a9a9a;"><i></i><b style="font-size:10.5px;">50</b></div>
<div class="t" style="left:667.1px;transform:translateX(-50%);top:649.70px;color:#9a9a9a;"><i></i><b style="font-size:10.5px;">100</b></div>
<div class="t" style="left:708.1px;transform:translateX(-50%);top:649.70px;color:#9a9a9a;"><i></i><b style="font-size:10.5px;">200</b></div>
<div class="t" style="left:734.9px;transform:translateX(-50%);top:649.70px;color:#9a9a9a;"><i></i><b style="font-size:10.5px;">300</b></div>
<div class="t" style="left:772px;transform:translateX(-50%);top:649.70px;color:#9a9a9a;"><i></i><b style="font-size:10.5px;">500</b></div>
<div class="t" style="left:824.9px;transform:translateX(-50%);top:649.70px;color:#9a9a9a;"><i></i><b style="font-size:10.5px;">1.0k</b></div>
<div class="t" style="left:881px;transform:translateX(-50%);top:649.70px;color:#9a9a9a;"><i></i><b style="font-size:10.5px;">2.0k</b></div>
<div class="t" style="left:914.1px;transform:translateX(-50%);top:649.70px;color:#9a9a9a;"><i></i><b style="font-size:10.5px;">3.0k</b></div>
<div class="t" style="left:957px;transform:translateX(-50%);top:649.70px;color:#9a9a9a;"><i></i><b style="font-size:10.5px;">5.0k</b></div>
<div class="t" style="left:1013.9px;transform:translateX(-50%);top:649.70px;color:#9a9a9a;"><i></i><b style="font-size:10.5px;">10.0k</b></div>
<div class="t" style="left:1071.8px;transform:translateX(-50%);top:649.70px;color:#9a9a9a;"><i></i><b style="font-size:10.5px;">20.0k</b></div>
<div class="t" style="right:192.5px;top:389.20px;color:#9a9a9a;"><i></i><b style="font-size:10.5px;">+12</b></div>
<div class="t" style="right:192.5px;top:418.60px;color:#9a9a9a;"><i></i><b style="font-size:10.5px;">+0</b></div>
<div class="t" style="right:192.5px;top:448.20px;color:#9a9a9a;"><i></i><b style="font-size:10.5px;">-12</b></div>
<div class="t" style="right:192.5px;top:477.70px;color:#9a9a9a;"><i></i><b style="font-size:10.5px;">-24</b></div>
<div class="t" style="right:192.5px;top:507.20px;color:#9a9a9a;"><i></i><b style="font-size:10.5px;">-36</b></div>
<div class="t" style="right:192.5px;top:536.80px;color:#9a9a9a;"><i></i><b style="font-size:10.5px;">-48</b></div>
<div class="t" style="right:192.5px;top:566.20px;color:#9a9a9a;"><i></i><b style="font-size:10.5px;">-60</b></div>
<div class="t" style="right:192.5px;top:595.70px;color:#9a9a9a;"><i></i><b style="font-size:10.5px;">-72</b></div>
<div class="t" style="right:192.5px;top:625.20px;color:#9a9a9a;"><i></i><b style="font-size:10.5px;">-84</b></div>
<div class="t" style="right:191.5px;top:641.60px;color:#a8a850;"><i></i><b style="font-size:10.5px;">(-90)</b></div>
</body></html>
